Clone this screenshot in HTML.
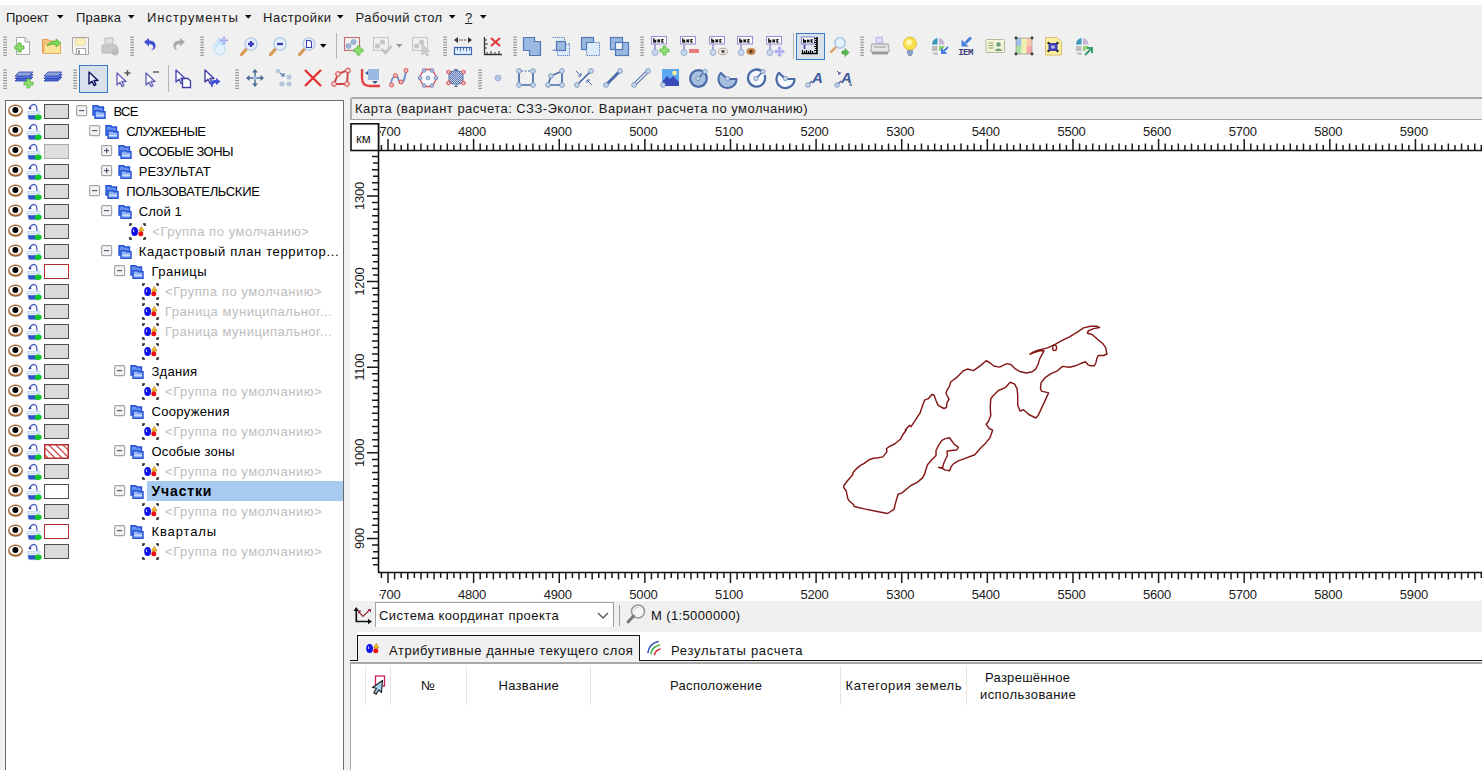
<!DOCTYPE html><html><head><meta charset="utf-8"><style>
html,body{margin:0;padding:0;}
body{width:1482px;height:770px;overflow:hidden;position:relative;background:#f0f0f0;font-family:"Liberation Sans",sans-serif;}
.t{position:absolute;white-space:nowrap;line-height:13px;font-family:"Liberation Sans",sans-serif;}
svg{overflow:visible}
</style></head><body>
<div style="position:absolute;left:0px;top:0px;width:1482px;height:5px;background:#fff"></div>
<div class="t" style="left:6px;top:11px;font-size:13px;letter-spacing:-0.03px;color:#1a1a1a;font-weight:400;">Проект</div>
<svg style="position:absolute;left:57px;top:15px" width="7" height="4" viewBox="0 0 7 4"><path d="M0 0H6.5L3.25 3.8Z" fill="#000"/></svg>
<div class="t" style="left:76px;top:11px;font-size:13px;letter-spacing:0.2px;color:#1a1a1a;font-weight:400;">Правка</div>
<svg style="position:absolute;left:128px;top:15px" width="7" height="4" viewBox="0 0 7 4"><path d="M0 0H6.5L3.25 3.8Z" fill="#000"/></svg>
<div class="t" style="left:147px;top:11px;font-size:13px;letter-spacing:0.97px;color:#1a1a1a;font-weight:400;">Инструменты</div>
<svg style="position:absolute;left:244.5px;top:15px" width="7" height="4" viewBox="0 0 7 4"><path d="M0 0H6.5L3.25 3.8Z" fill="#000"/></svg>
<div class="t" style="left:263px;top:11px;font-size:13px;letter-spacing:0.53px;color:#1a1a1a;font-weight:400;">Настройки</div>
<svg style="position:absolute;left:337px;top:15px" width="7" height="4" viewBox="0 0 7 4"><path d="M0 0H6.5L3.25 3.8Z" fill="#000"/></svg>
<div class="t" style="left:355.5px;top:11px;font-size:13px;letter-spacing:0.46px;color:#1a1a1a;font-weight:400;">Рабочий стол</div>
<svg style="position:absolute;left:448.5px;top:15px" width="7" height="4" viewBox="0 0 7 4"><path d="M0 0H6.5L3.25 3.8Z" fill="#000"/></svg>
<div class="t" style="left:465px;top:11px;font-size:13px;letter-spacing:0px;color:#1a1a1a;font-weight:400;"><u>?</u></div>
<svg style="position:absolute;left:480px;top:15px" width="7" height="4" viewBox="0 0 7 4"><path d="M0 0H6.5L3.25 3.8Z" fill="#000"/></svg>
<svg style="position:absolute;left:3px;top:36px" width="4" height="20" viewBox="0 0 4 20"><rect x="0.3" y="0.60" width="3.6" height="1.1" fill="#8c8c8c"/><rect x="0.3" y="3.20" width="3.6" height="1.1" fill="#8c8c8c"/><rect x="0.3" y="5.80" width="3.6" height="1.1" fill="#8c8c8c"/><rect x="0.3" y="8.40" width="3.6" height="1.1" fill="#8c8c8c"/><rect x="0.3" y="11.00" width="3.6" height="1.1" fill="#8c8c8c"/><rect x="0.3" y="13.60" width="3.6" height="1.1" fill="#8c8c8c"/><rect x="0.3" y="16.20" width="3.6" height="1.1" fill="#8c8c8c"/><rect x="0.3" y="18.80" width="3.6" height="1.1" fill="#8c8c8c"/></svg>
<svg style="position:absolute;left:12px;top:36px" width="20" height="20" viewBox="0 0 20 20"><path d="M4.5 1.5H13L17.5 6V18.5H4.5Z" fill="#fff" stroke="#a8a8a8"/><path d="M13 1.5V6H17.5" fill="#e8e8e8" stroke="#a8a8a8"/><path d="M3 10H6V7H9V10H12V13H9V16H6V13H3Z" fill="#8fe070" stroke="#5cb83c"/></svg>
<svg style="position:absolute;left:41px;top:36px" width="20" height="20" viewBox="0 0 20 20"><path d="M1.5 3.5H7L8.5 5H14V17H1.5Z" fill="#f7c27c" stroke="#e59a4e"/><path d="M3 8H19.5V17.5H3Z" fill="#fde39a" stroke="#e9a95e"/><path d="M6 10C8 6 12 5 15 5.5V3L20 7L15 11V8.5C12 8 9 8.5 6 10Z" fill="#7ad957" stroke="#4fb332" stroke-width=".8"/></svg>
<svg style="position:absolute;left:71px;top:36px" width="20" height="20" viewBox="0 0 20 20"><path d="M1.5 1.5H17.5V18.5H3.5L1.5 16.5Z" fill="#f4f4f4" stroke="#a6a6a6"/><rect x="4.5" y="2.5" width="10" height="7" fill="#fcefb8" stroke="#d9ceb0" stroke-width=".6"/><rect x="5.5" y="12.5" width="9" height="6" fill="#fff" stroke="#a6a6a6"/><rect x="7" y="14" width="2" height="4" fill="#a6a6a6"/></svg>
<svg style="position:absolute;left:100px;top:36px" width="20" height="20" viewBox="0 0 20 20"><path d="M5 2H13V8H5Z" fill="#e0e0e0" stroke="#bdbdbd"/><path d="M2 9H16L18 13V17H2Z" fill="#c8c8c8" stroke="#b8b8b8"/><circle cx="15" cy="16" r="3.5" fill="#bdbdbd"/></svg>
<svg style="position:absolute;left:130px;top:36px" width="4" height="20" viewBox="0 0 4 20"><rect x="0.3" y="0.60" width="3.6" height="1.1" fill="#8c8c8c"/><rect x="0.3" y="3.20" width="3.6" height="1.1" fill="#8c8c8c"/><rect x="0.3" y="5.80" width="3.6" height="1.1" fill="#8c8c8c"/><rect x="0.3" y="8.40" width="3.6" height="1.1" fill="#8c8c8c"/><rect x="0.3" y="11.00" width="3.6" height="1.1" fill="#8c8c8c"/><rect x="0.3" y="13.60" width="3.6" height="1.1" fill="#8c8c8c"/><rect x="0.3" y="16.20" width="3.6" height="1.1" fill="#8c8c8c"/><rect x="0.3" y="18.80" width="3.6" height="1.1" fill="#8c8c8c"/></svg>
<svg style="position:absolute;left:141px;top:36px" width="20" height="20" viewBox="0 0 20 20"><path d="M3 6L8 2V4.5C12 4.5 15 6.5 14.5 10.5C14.2 13 12 14.5 10 14L12 12.5C13 11 12 8 8 8V10.5Z" fill="#3f4fd6"/></svg>
<svg style="position:absolute;left:170px;top:36px" width="20" height="20" viewBox="0 0 20 20"><path d="M15 6L10 2V4.5C6 4.5 3 6.5 3.5 10.5C3.8 13 6 14.5 8 14L6 12.5C5 11 6 8 10 8V10.5Z" fill="#a9a9a9"/></svg>
<svg style="position:absolute;left:200px;top:36px" width="4" height="20" viewBox="0 0 4 20"><rect x="0.3" y="0.60" width="3.6" height="1.1" fill="#8c8c8c"/><rect x="0.3" y="3.20" width="3.6" height="1.1" fill="#8c8c8c"/><rect x="0.3" y="5.80" width="3.6" height="1.1" fill="#8c8c8c"/><rect x="0.3" y="8.40" width="3.6" height="1.1" fill="#8c8c8c"/><rect x="0.3" y="11.00" width="3.6" height="1.1" fill="#8c8c8c"/><rect x="0.3" y="13.60" width="3.6" height="1.1" fill="#8c8c8c"/><rect x="0.3" y="16.20" width="3.6" height="1.1" fill="#8c8c8c"/><rect x="0.3" y="18.80" width="3.6" height="1.1" fill="#8c8c8c"/></svg>
<svg style="position:absolute;left:210px;top:36px" width="20" height="20" viewBox="0 0 20 20"><path d="M4 10C3 8 5 7 6 9L7 11V4C7 2.5 9 2.5 9 4V9V3C9 1.5 11 1.5 11 3V9V4C11 2.5 13 2.5 13 4V10V6C13 5 15 5 15 6V13C15 17 12 19 9 19C6 19 5 16 4 10Z" fill="#e4f2fb" stroke="#b7dcf2"/><path d="M14.5 1L16.5 3.5H15.3V5.2H17V4L19.5 6L17 8V6.8H15.3V8.5H16.5L14.5 11L12.5 8.5H13.7V6.8H12V8L9.5 6L12 4V5.2H13.7V3.5H12.5Z" fill="#a9a6f0" transform="translate(1,-1) scale(.9)"/></svg>
<svg style="position:absolute;left:239px;top:36px" width="20" height="20" viewBox="0 0 20 20"><path d="M2.5 18.5L8 12.5" stroke="#d79a55" stroke-width="3.2" stroke-linecap="round"/><circle cx="12" cy="8" r="6" fill="#e9f3fb" stroke="#b8cde6" stroke-width="1.6"/><path d="M9 8H15M12 5V11" stroke="#3b3fb0" stroke-width="2.4"/></svg>
<svg style="position:absolute;left:267.6px;top:36px" width="20" height="20" viewBox="0 0 20 20"><path d="M2.5 18.5L8 12.5" stroke="#d79a55" stroke-width="3.2" stroke-linecap="round"/><circle cx="12" cy="8" r="6" fill="#e9f3fb" stroke="#b8cde6" stroke-width="1.6"/><path d="M9 8H15" stroke="#3b3fb0" stroke-width="2.4"/></svg>
<svg style="position:absolute;left:296.6px;top:36px" width="20" height="20" viewBox="0 0 20 20"><path d="M2.5 18.5L8 12.5" stroke="#d79a55" stroke-width="3.2" stroke-linecap="round"/><circle cx="12" cy="8" r="6" fill="#e9f3fb" stroke="#b8cde6" stroke-width="1.6"/><path d="M9.5 4.5H13L14.5 6V11.5H9.5Z" fill="#fff" stroke="#3b3fb0" stroke-width="1.1"/></svg>
<svg style="position:absolute;left:320px;top:44px" width="7" height="4" viewBox="0 0 7 4"><path d="M0 0H6.5L3.25 3.8Z" fill="#000"/></svg>
<div style="position:absolute;left:335.5px;top:33px;width:1px;height:26px;background:#b4b4b4"></div>
<svg style="position:absolute;left:342.5px;top:36px" width="20" height="20" viewBox="0 0 20 20"><rect x="1.5" y="1.5" width="15" height="13" fill="none" stroke="#c07070" stroke-width="1.1"/><circle cx="5.5" cy="10" r="2.6" fill="#9fb6da" stroke="#7f99c2" stroke-width=".6"/><circle cx="10.5" cy="6" r="2.6" fill="#9fb6da" stroke="#7f99c2" stroke-width=".6"/><path d="M11 13H14V10H17V13H20V16H17V19H14V16H11Z" fill="#8fe070" stroke="#5cb83c" stroke-width=".8"/></svg>
<svg style="position:absolute;left:371.5px;top:36px" width="20" height="20" viewBox="0 0 20 20"><rect x="1.5" y="1.5" width="15" height="13" fill="none" stroke="#c8c8c8" stroke-width="1.1"/><circle cx="5.5" cy="10" r="2.6" fill="#c6c6c6"/><circle cx="10.5" cy="6" r="2.6" fill="#c6c6c6"/><path d="M9.5 13L13.5 17L19.5 10" fill="none" stroke="#c4c4c4" stroke-width="2.6"/></svg>
<svg style="position:absolute;left:395.5px;top:44px" width="7" height="4" viewBox="0 0 7 4"><path d="M0 0H6.5L3.25 3.8Z" fill="#9a9a9a"/></svg>
<svg style="position:absolute;left:411px;top:36px" width="20" height="20" viewBox="0 0 20 20"><rect x="1.5" y="1.5" width="15" height="13" fill="none" stroke="#c8c8c8" stroke-width="1.1"/><circle cx="5.5" cy="10" r="2.6" fill="#c6c6c6"/><circle cx="10.5" cy="6" r="2.6" fill="#c6c6c6"/><path d="M11 8L11 19L13.5 16.5L16 20L17.5 19L15 15.5H18.5Z" fill="#d0d0d0" stroke="#b0b0b0" stroke-width=".6"/></svg>
<svg style="position:absolute;left:442.7px;top:36px" width="4" height="20" viewBox="0 0 4 20"><rect x="0.3" y="0.60" width="3.6" height="1.1" fill="#8c8c8c"/><rect x="0.3" y="3.20" width="3.6" height="1.1" fill="#8c8c8c"/><rect x="0.3" y="5.80" width="3.6" height="1.1" fill="#8c8c8c"/><rect x="0.3" y="8.40" width="3.6" height="1.1" fill="#8c8c8c"/><rect x="0.3" y="11.00" width="3.6" height="1.1" fill="#8c8c8c"/><rect x="0.3" y="13.60" width="3.6" height="1.1" fill="#8c8c8c"/><rect x="0.3" y="16.20" width="3.6" height="1.1" fill="#8c8c8c"/><rect x="0.3" y="18.80" width="3.6" height="1.1" fill="#8c8c8c"/></svg>
<svg style="position:absolute;left:453px;top:36px" width="20" height="20" viewBox="0 0 20 20"><path d="M1 4L5 1V7Z M19 4L15 1V7Z" fill="#333"/><path d="M6 4H14" stroke="#333" stroke-dasharray="1.5 1" stroke-width="1.1"/><rect x="1.5" y="11.5" width="17" height="7" fill="#e2efff" stroke="#3f64b2" stroke-width="1.2"/><path d="M4.5 12V14.5M7.5 12V15.5M10.5 12V14.5M13.5 12V15.5M16.5 12V14.5" stroke="#3f64b2" stroke-width=".9"/></svg>
<svg style="position:absolute;left:482.6px;top:36px" width="20" height="20" viewBox="0 0 20 20"><path d="M1.5 1V18.5H19" fill="none" stroke="#333" stroke-width="1.3"/><path d="M2 4H4M2 8H5M2 12H4M4 18V16M8 18V15M12 18V16M16 18V15" stroke="#333" stroke-width="1"/><path d="M8 2L17 10M17 2L8 10" stroke="#e03838" stroke-width="2"/></svg>
<svg style="position:absolute;left:513px;top:36px" width="4" height="20" viewBox="0 0 4 20"><rect x="0.3" y="0.60" width="3.6" height="1.1" fill="#8c8c8c"/><rect x="0.3" y="3.20" width="3.6" height="1.1" fill="#8c8c8c"/><rect x="0.3" y="5.80" width="3.6" height="1.1" fill="#8c8c8c"/><rect x="0.3" y="8.40" width="3.6" height="1.1" fill="#8c8c8c"/><rect x="0.3" y="11.00" width="3.6" height="1.1" fill="#8c8c8c"/><rect x="0.3" y="13.60" width="3.6" height="1.1" fill="#8c8c8c"/><rect x="0.3" y="16.20" width="3.6" height="1.1" fill="#8c8c8c"/><rect x="0.3" y="18.80" width="3.6" height="1.1" fill="#8c8c8c"/></svg>
<svg style="position:absolute;left:522.4px;top:36px" width="20" height="20" viewBox="0 0 20 20"><path d="M1.5 1.5H12.5V5.5H18.5V19.5H7.5V14.5H1.5Z" fill="#9ab8e0" stroke="#5278b8" stroke-width="1.2"/></svg>
<svg style="position:absolute;left:551.4px;top:36px" width="20" height="20" viewBox="0 0 20 20"><path d="M1.5 1.5H13.5V5.5M18.5 7.5V19.5H6.5V14.5H1.5Z" fill="#dcebf9" stroke="#5278b8" stroke-width="1" stroke-dasharray="1.2 1"/><rect x="5.5" y="5.5" width="9" height="9" fill="#9ab8e0" stroke="#5278b8" stroke-width="1.2"/></svg>
<svg style="position:absolute;left:580px;top:36px" width="20" height="20" viewBox="0 0 20 20"><rect x="1.5" y="1.5" width="12" height="12" fill="#9ab8e0" stroke="#5278b8" stroke-width="1.2"/><rect x="6.5" y="6.5" width="13" height="13" fill="#dcebf9" stroke="#5278b8" stroke-width="1" stroke-dasharray="1.2 1"/><path d="M6.5 13.5V6.5H13.5" fill="none" stroke="#5278b8" stroke-width="1.2"/></svg>
<svg style="position:absolute;left:609px;top:36px" width="20" height="20" viewBox="0 0 20 20"><rect x="1.5" y="1.5" width="12" height="12" fill="#9ab8e0" stroke="#5278b8" stroke-width="1.2"/><rect x="6.5" y="6.5" width="13" height="13" fill="#9ab8e0" stroke="#5278b8" stroke-width="1.2"/><rect x="6.5" y="6.5" width="7" height="7" fill="#f4f8fd" stroke="#5278b8" stroke-width="1.2"/></svg>
<svg style="position:absolute;left:640px;top:36px" width="4" height="20" viewBox="0 0 4 20"><rect x="0.3" y="0.60" width="3.6" height="1.1" fill="#8c8c8c"/><rect x="0.3" y="3.20" width="3.6" height="1.1" fill="#8c8c8c"/><rect x="0.3" y="5.80" width="3.6" height="1.1" fill="#8c8c8c"/><rect x="0.3" y="8.40" width="3.6" height="1.1" fill="#8c8c8c"/><rect x="0.3" y="11.00" width="3.6" height="1.1" fill="#8c8c8c"/><rect x="0.3" y="13.60" width="3.6" height="1.1" fill="#8c8c8c"/><rect x="0.3" y="16.20" width="3.6" height="1.1" fill="#8c8c8c"/><rect x="0.3" y="18.80" width="3.6" height="1.1" fill="#8c8c8c"/></svg>
<svg style="position:absolute;left:650.3px;top:36px" width="20" height="20" viewBox="0 0 20 20"><rect x="1.5" y="0.5" width="15" height="7.5" fill="#fff" stroke="#9e92d8" stroke-width="1.1"/><path d="M3.8 2.3V6.2H5.6V4.3H3.8M7.5 3.5L10 6.2M10 3.5L7.5 6.2M13.6 3.6H12V6.2H13.6" fill="none" stroke="#111" stroke-width="1.3"/><path d="M5 8V14" stroke="#9e92d8" stroke-width="1.6"/><circle cx="5" cy="16.5" r="3" fill="#c9d8ee" stroke="#8ca6cc" stroke-width=".8"/><path d="M10 13H13V10H16V13H19V16H16V19H13V16H10Z" fill="#8fe070" stroke="#5cb83c" stroke-width=".8"/></svg>
<svg style="position:absolute;left:679.3px;top:36px" width="20" height="20" viewBox="0 0 20 20"><rect x="1.5" y="0.5" width="15" height="7.5" fill="#fff" stroke="#9e92d8" stroke-width="1.1"/><path d="M3.8 2.3V6.2H5.6V4.3H3.8M7.5 3.5L10 6.2M10 3.5L7.5 6.2M13.6 3.6H12V6.2H13.6" fill="none" stroke="#111" stroke-width="1.3"/><path d="M5 8V14" stroke="#9e92d8" stroke-width="1.6"/><circle cx="5" cy="16.5" r="3" fill="#c9d8ee" stroke="#8ca6cc" stroke-width=".8"/><rect x="10" y="13" width="10" height="4" fill="#ea7a7a"/></svg>
<svg style="position:absolute;left:707.6px;top:36px" width="20" height="20" viewBox="0 0 20 20"><rect x="1.5" y="0.5" width="15" height="7.5" fill="#fff" stroke="#9e92d8" stroke-width="1.1"/><path d="M3.8 2.3V6.2H5.6V4.3H3.8M7.5 3.5L10 6.2M10 3.5L7.5 6.2M13.6 3.6H12V6.2H13.6" fill="none" stroke="#111" stroke-width="1.3"/><path d="M5 8V14" stroke="#9e92d8" stroke-width="1.6"/><circle cx="5" cy="16.5" r="3" fill="#c9d8ee" stroke="#8ca6cc" stroke-width=".8"/><ellipse cx="15" cy="15.5" rx="4.5" ry="3.2" fill="#eee" stroke="#b8a890"/><circle cx="15" cy="15.5" r="1.7" fill="#555"/></svg>
<svg style="position:absolute;left:736px;top:36px" width="20" height="20" viewBox="0 0 20 20"><rect x="1.5" y="0.5" width="15" height="7.5" fill="#fff" stroke="#9e92d8" stroke-width="1.1"/><path d="M3.8 2.3V6.2H5.6V4.3H3.8M7.5 3.5L10 6.2M10 3.5L7.5 6.2M13.6 3.6H12V6.2H13.6" fill="none" stroke="#111" stroke-width="1.3"/><path d="M5 8V14" stroke="#9e92d8" stroke-width="1.6"/><circle cx="5" cy="16.5" r="3" fill="#c9d8ee" stroke="#8ca6cc" stroke-width=".8"/><ellipse cx="15" cy="15.5" rx="4.5" ry="3.4" fill="#c7864e"/><circle cx="15" cy="15.5" r="1.7" fill="#5a3a20"/></svg>
<svg style="position:absolute;left:765.4px;top:36px" width="20" height="20" viewBox="0 0 20 20"><rect x="1.5" y="0.5" width="15" height="7.5" fill="#fff" stroke="#9e92d8" stroke-width="1.1"/><path d="M3.8 2.3V6.2H5.6V4.3H3.8M7.5 3.5L10 6.2M10 3.5L7.5 6.2M13.6 3.6H12V6.2H13.6" fill="none" stroke="#111" stroke-width="1.3"/><path d="M5 8V14" stroke="#9e92d8" stroke-width="1.6"/><circle cx="5" cy="16.5" r="3" fill="#c9d8ee" stroke="#8ca6cc" stroke-width=".8"/><path d="M14.5 10L17 12.5H15.5V14.5H17.5V13L20 15.5L17.5 18V16.5H15.5V18.5H17L14.5 21L12 18.5H13.5V16.5H11.5V18L9 15.5L11.5 13V14.5H13.5V12.5H12Z" fill="#a9a6f0"/></svg>
<div style="position:absolute;left:793px;top:33px;width:1px;height:26px;background:#b4b4b4"></div>
<div style="position:absolute;left:796.4px;top:32.5px;width:28.4px;height:27.5px;box-sizing:border-box;border:1.3px solid #3a7cc8;background:#d8e1ec"></div>
<svg style="position:absolute;left:800px;top:36px" width="20" height="20" viewBox="0 0 20 20"><rect x="1.5" y="1" width="13" height="14" fill="#e4e8f4"/><rect x="1.5" y="1" width="13" height="7" fill="#fff" stroke="#8a84c8" stroke-width="1.1"/><path d="M3.6 2.8V6.2H5.4V4.6H3.6M7 3.8L9.4 6.2M9.4 3.8L7 6.2M12.8 3.8H11.2V6.2H12.8" fill="none" stroke="#000" stroke-width="1.3"/><path d="M4.5 8.5V13" stroke="#5050a8" stroke-width="1.8"/><path d="M17 1V17.5H1.5" fill="none" stroke="#000" stroke-width="1.6"/><path d="M14 2.5H17M15 4.5H17M14 6.5H17M15 8.5H17M14 10.5H17M15 12.5H17M14 14.5H17M2.5 14V17.5M4.5 15V17.5M6.5 14V17.5M8.5 15V17.5M10.5 14V17.5M12.5 15V17.5" stroke="#000" stroke-width="1.2"/></svg>
<svg style="position:absolute;left:828.8px;top:36px" width="20" height="20" viewBox="0 0 20 20"><path d="M2 16L7 11" stroke="#e0a060" stroke-width="2.4" stroke-linecap="round"/><circle cx="11" cy="7" r="5.2" fill="#e4f4fc" stroke="#b4c8e4" stroke-width="1.8"/><path d="M13 15H16V12.5L20 16.5L16 20.5V18H13Z" fill="#58b848" stroke="#3a9a38" stroke-width=".6"/></svg>
<svg style="position:absolute;left:860px;top:36px" width="4" height="20" viewBox="0 0 4 20"><rect x="0.3" y="0.60" width="3.6" height="1.1" fill="#8c8c8c"/><rect x="0.3" y="3.20" width="3.6" height="1.1" fill="#8c8c8c"/><rect x="0.3" y="5.80" width="3.6" height="1.1" fill="#8c8c8c"/><rect x="0.3" y="8.40" width="3.6" height="1.1" fill="#8c8c8c"/><rect x="0.3" y="11.00" width="3.6" height="1.1" fill="#8c8c8c"/><rect x="0.3" y="13.60" width="3.6" height="1.1" fill="#8c8c8c"/><rect x="0.3" y="16.20" width="3.6" height="1.1" fill="#8c8c8c"/><rect x="0.3" y="18.80" width="3.6" height="1.1" fill="#8c8c8c"/></svg>
<svg style="position:absolute;left:870px;top:36px" width="20" height="20" viewBox="0 0 20 20"><path d="M6 1.5L12 1L13 7H6Z" fill="#dcdcfa" stroke="#a9a9e0" stroke-width=".8"/><path d="M2 8H18L19 12V16H1V12Z" fill="#e4e4e4" stroke="#a0a0a0"/><path d="M2 16H18V18.5H2Z" fill="#9a9a9a"/><path d="M4 11H16" stroke="#888" stroke-width=".8"/></svg>
<svg style="position:absolute;left:900px;top:36px" width="20" height="20" viewBox="0 0 20 20"><circle cx="10" cy="7.5" r="6.5" fill="#f9e04a" stroke="#e0c23a"/><circle cx="9" cy="6.5" r="3" fill="#fff7b0"/><path d="M7 15H13M7 17H13M8 19H12" stroke="#7086b8" stroke-width="1.5"/></svg>
<svg style="position:absolute;left:929.4px;top:36px" width="20" height="20" viewBox="0 0 20 20"><path d="M3 8.5A6.5 6.5 0 0 1 8.5 2V8.5Z" fill="#3a98c0"/><path d="M10 2A6.5 6.5 0 0 1 15.5 8.5H10Z" fill="#c4b8d4"/><rect x="3" y="10" width="5.5" height="5" fill="#bcbcbc"/><path d="M10 10H15.5A6.5 6.5 0 0 1 10 15Z" fill="#8fd070"/><path d="M3 16.5H8.5V19A6 6 0 0 1 3 16.5Z" fill="#bcbcbc"/><path d="M19 11L13 17M13 12.5V17H17.5" stroke="#4a7ee0" stroke-width="2" fill="none"/></svg>
<svg style="position:absolute;left:956px;top:36px" width="20" height="20" viewBox="0 0 20 20"><path d="M15 1.5L9.5 7" stroke="#4a7ee0" stroke-width="3"/><path d="M5.5 3.5V10.5H12.5Z" fill="#4a7ee0"/><text x="9.5" y="19.3" font-family="Liberation Mono" font-weight="700" font-size="9" letter-spacing="-0.6" text-anchor="middle" fill="#3a3a78">IEM</text></svg>
<svg style="position:absolute;left:985.3px;top:36px" width="20" height="20" viewBox="0 0 20 20"><rect x="1" y="3.5" width="18.5" height="13" rx="1" fill="#f2f4d8" stroke="#b8b8a0"/><path d="M3.5 7H8.5M3.5 9.5H8.5M3.5 12H8.5" stroke="#8aa070" stroke-width="1"/><circle cx="13.5" cy="8.5" r="2.3" fill="#6aa080"/><path d="M10 15C10 11.5 17 11.5 17 15Z" fill="#6aa080"/></svg>
<svg style="position:absolute;left:1014px;top:36px" width="20" height="20" viewBox="0 0 20 20"><rect x="2" y="2" width="5.5" height="8" fill="#9ec0e8"/><rect x="2" y="10" width="5.5" height="8" fill="#a8e0a0"/><rect x="7.5" y="2" width="5" height="16" fill="#f0f0b0"/><rect x="12.5" y="2" width="5.5" height="8" fill="#f8c8a8"/><rect x="12.5" y="10" width="5.5" height="8" fill="#f8a8a8"/><rect x="2" y="2" width="16" height="16" fill="none" stroke="#888" stroke-width=".6"/><circle cx="2" cy="2" r="1.4" fill="#333"/><circle cx="18" cy="2" r="1.4" fill="#333"/><circle cx="2" cy="18" r="1.4" fill="#333"/><circle cx="18" cy="18" r="1.4" fill="#333"/></svg>
<svg style="position:absolute;left:1044px;top:36px" width="20" height="20" viewBox="0 0 20 20"><path d="M1.5 1.5H13L17.5 6V19H1.5Z" fill="#faf0a0" stroke="#d8c070"/><rect x="4.5" y="7" width="9" height="8" fill="#3c3cb0"/><rect x="7" y="9.5" width="4" height="3" fill="#aab0f0"/><circle cx="4.5" cy="7" r="1.2" fill="#222"/><circle cx="13.5" cy="7" r="1.2" fill="#222"/><circle cx="4.5" cy="15" r="1.2" fill="#222"/><circle cx="13.5" cy="15" r="1.2" fill="#222"/></svg>
<svg style="position:absolute;left:1073px;top:36px" width="20" height="20" viewBox="0 0 20 20"><path d="M3 8.5A6.5 6.5 0 0 1 8.5 2V8.5Z" fill="#3a98c0"/><path d="M10 2A6.5 6.5 0 0 1 15.5 8.5H10Z" fill="#c4b8d4"/><rect x="3" y="10" width="5.5" height="5" fill="#bcbcbc"/><path d="M10 10H15.5A6.5 6.5 0 0 1 10 15Z" fill="#8fd070"/><path d="M3 16.5H8.5V19A6 6 0 0 1 3 16.5Z" fill="#bcbcbc"/><path d="M12 19L18.5 12.5M14 12H19V17" stroke="#3aa070" stroke-width="2" fill="none"/></svg>
<svg style="position:absolute;left:3px;top:68.5px" width="4" height="20" viewBox="0 0 4 20"><rect x="0.3" y="0.60" width="3.6" height="1.1" fill="#8c8c8c"/><rect x="0.3" y="3.20" width="3.6" height="1.1" fill="#8c8c8c"/><rect x="0.3" y="5.80" width="3.6" height="1.1" fill="#8c8c8c"/><rect x="0.3" y="8.40" width="3.6" height="1.1" fill="#8c8c8c"/><rect x="0.3" y="11.00" width="3.6" height="1.1" fill="#8c8c8c"/><rect x="0.3" y="13.60" width="3.6" height="1.1" fill="#8c8c8c"/><rect x="0.3" y="16.20" width="3.6" height="1.1" fill="#8c8c8c"/><rect x="0.3" y="18.80" width="3.6" height="1.1" fill="#8c8c8c"/></svg>
<svg style="position:absolute;left:13.5px;top:68px" width="20" height="20" viewBox="0 0 20 20"><path d="M1 13L5 9H19L15 13Z" fill="#4a66d0" stroke="#3040b0" stroke-width=".8"/><path d="M1 10.5L5 6.5H19L15 10.5Z" fill="#5a76e0" stroke="#3040b0" stroke-width=".8"/><path d="M1 8L5 4H19L15 8Z" fill="#8aa4d8" stroke="#3040b0" stroke-width=".8"/><path d="M10 14H13V11H16V14H19V17H16V20H13V17H10Z" fill="#8fe070" stroke="#5cb83c" stroke-width=".8"/></svg>
<svg style="position:absolute;left:42.5px;top:68px" width="20" height="20" viewBox="0 0 20 20"><path d="M1 13L5 9H19L15 13Z" fill="#4a66d0" stroke="#3040b0" stroke-width=".8"/><path d="M1 10.5L5 6.5H19L15 10.5Z" fill="#5a76e0" stroke="#3040b0" stroke-width=".8"/><path d="M1 8L5 4H19L15 8Z" fill="#8aa4d8" stroke="#3040b0" stroke-width=".8"/></svg>
<svg style="position:absolute;left:73px;top:68.5px" width="4" height="20" viewBox="0 0 4 20"><rect x="0.3" y="0.60" width="3.6" height="1.1" fill="#8c8c8c"/><rect x="0.3" y="3.20" width="3.6" height="1.1" fill="#8c8c8c"/><rect x="0.3" y="5.80" width="3.6" height="1.1" fill="#8c8c8c"/><rect x="0.3" y="8.40" width="3.6" height="1.1" fill="#8c8c8c"/><rect x="0.3" y="11.00" width="3.6" height="1.1" fill="#8c8c8c"/><rect x="0.3" y="13.60" width="3.6" height="1.1" fill="#8c8c8c"/><rect x="0.3" y="16.20" width="3.6" height="1.1" fill="#8c8c8c"/><rect x="0.3" y="18.80" width="3.6" height="1.1" fill="#8c8c8c"/></svg>
<div style="position:absolute;left:79px;top:65px;width:29px;height:27.5px;box-sizing:border-box;border:1.3px solid #3a7cc8;background:#d8e1ec"></div>
<svg style="position:absolute;left:79px;top:68px" width="20" height="20" viewBox="0 0 20 20"><path transform="translate(9 3)" d="M1 1V13L4 10.3L6 14.5L7.8 13.6L6 9.5H10Z" fill="#f0f0ff" stroke="#10105a" stroke-width="1.4" stroke-linejoin="round"/></svg>
<svg style="position:absolute;left:113px;top:68px" width="20" height="20" viewBox="0 0 20 20"><path transform="translate(3 4)" d="M1 1V13L4 10.3L6 14.5L7.8 13.6L6 9.5H10Z" fill="#fff" stroke="#6a64b8" stroke-width="1.4" stroke-linejoin="round"/><path d="M11.5 5H17.5M14.5 2V8" stroke="#555" stroke-width="1.4"/></svg>
<svg style="position:absolute;left:142px;top:68px" width="20" height="20" viewBox="0 0 20 20"><path transform="translate(3 4)" d="M1 1V13L4 10.3L6 14.5L7.8 13.6L6 9.5H10Z" fill="#fff" stroke="#6a64b8" stroke-width="1.4" stroke-linejoin="round"/><path d="M11 4H17" stroke="#555" stroke-width="1.4"/></svg>
<div style="position:absolute;left:168px;top:65px;width:1px;height:27px;background:#b4b4b4"></div>
<svg style="position:absolute;left:172px;top:68px" width="20" height="20" viewBox="0 0 20 20"><path transform="translate(3 1)" d="M1 1V13L4 10.3L6 14.5L7.8 13.6L6 9.5H10Z" fill="#fff" stroke="#5050b0" stroke-width="1.4" stroke-linejoin="round"/><path d="M10.5 10.5H16L18.5 13V19.5H10.5Z" fill="#fff" stroke="#4040a8" stroke-width="1.3"/></svg>
<svg style="position:absolute;left:201px;top:68px" width="20" height="20" viewBox="0 0 20 20"><path transform="translate(3 1)" d="M1 1V13L4 10.3L6 14.5L7.8 13.6L6 9.5H10Z" fill="#fff" stroke="#4040a8" stroke-width="1.4" stroke-linejoin="round"/><path d="M19.5 13.5L15 10V12C12 11.5 9.5 13 9.5 16C9.5 17.5 10.5 19 12 19.5C11.5 18 11.5 15 15 15V17Z" fill="#3f4fd6"/></svg>
<svg style="position:absolute;left:235px;top:68.5px" width="4" height="20" viewBox="0 0 4 20"><rect x="0.3" y="0.60" width="3.6" height="1.1" fill="#8c8c8c"/><rect x="0.3" y="3.20" width="3.6" height="1.1" fill="#8c8c8c"/><rect x="0.3" y="5.80" width="3.6" height="1.1" fill="#8c8c8c"/><rect x="0.3" y="8.40" width="3.6" height="1.1" fill="#8c8c8c"/><rect x="0.3" y="11.00" width="3.6" height="1.1" fill="#8c8c8c"/><rect x="0.3" y="13.60" width="3.6" height="1.1" fill="#8c8c8c"/><rect x="0.3" y="16.20" width="3.6" height="1.1" fill="#8c8c8c"/><rect x="0.3" y="18.80" width="3.6" height="1.1" fill="#8c8c8c"/></svg>
<svg style="position:absolute;left:245px;top:68px" width="20" height="20" viewBox="0 0 20 20"><path d="M10 2V18M2 10H18" stroke="#4a6a98" stroke-width="1.4"/><path d="M10 1L7 4.5H13Z M10 19L7 15.5H13Z M1 10L4.5 7V13Z M19 10L15.5 7V13Z" fill="#4a6a98"/><circle cx="10" cy="10" r="2" fill="#a8bcdc"/></svg>
<svg style="position:absolute;left:274px;top:68px" width="20" height="20" viewBox="0 0 20 20"><circle cx="4" cy="3" r="2.3" fill="#b6c6e0"/><path d="M6 5L10 8M10 5V8H7" stroke="#5a7ab8" stroke-width="1.2" fill="none"/><circle cx="15" cy="9" r="2.6" fill="#b6c6e0"/><circle cx="8" cy="16" r="2.6" fill="#b6c6e0"/><circle cx="15" cy="16" r="2.6" fill="#b6c6e0"/></svg>
<svg style="position:absolute;left:303px;top:68px" width="20" height="20" viewBox="0 0 20 20"><path d="M2 2L18 18M18 2L2 18" stroke="#e03030" stroke-width="2.3"/></svg>
<svg style="position:absolute;left:331px;top:68px" width="20" height="20" viewBox="0 0 20 20"><path d="M3 16L7 6L17 2L16 16Z" fill="none" stroke="#c84848" stroke-width="2"/><circle cx="3" cy="16" r="2.4" fill="#f8d0d0" stroke="#d84848"/><circle cx="7" cy="6" r="2.4" fill="#f8d0d0" stroke="#d84848"/><circle cx="17" cy="2.5" r="2.4" fill="#f8d0d0" stroke="#d84848"/><circle cx="16" cy="16" r="2.4" fill="#f8d0d0" stroke="#d84848"/></svg>
<svg style="position:absolute;left:360px;top:68px" width="20" height="20" viewBox="0 0 20 20"><path d="M2 1V10C2 15 5 18 10 18H20" fill="none" stroke="#e04040" stroke-width="2.3"/><rect x="8" y="1" width="11" height="11" fill="#9ab8e0"/><path d="M8 3L5 5L8 7Z" fill="#3a5aa0"/><path d="M12 13H18L15 16Z" fill="#3a5aa0"/></svg>
<svg style="position:absolute;left:388.8px;top:68px" width="20" height="20" viewBox="0 0 20 20"><path d="M2 17C2 12 4 8 7 8C10 8 9 15 12 15C15 15 16 9 17 3" fill="none" stroke="#6a90c8" stroke-width="1.8"/><circle cx="2.5" cy="17" r="2" fill="#f8c0c0" stroke="#e05050"/><circle cx="6.5" cy="7.5" r="2" fill="#f8c0c0" stroke="#e05050"/><circle cx="12" cy="14" r="2" fill="#f8c0c0" stroke="#e05050"/><circle cx="17" cy="2.5" r="2" fill="#f8c0c0" stroke="#e05050"/></svg>
<svg style="position:absolute;left:417.8px;top:68px" width="20" height="20" viewBox="0 0 20 20"><path d="M6 1.5H14L19 10L14 18.5H6L1 10Z" fill="#f4f8fd" stroke="#e05050" stroke-width="1.3"/><g fill="#b6c6e0" stroke="#5a7ab8" stroke-width=".7"><circle cx="6" cy="2.5" r="1.8"/><circle cx="14" cy="2.5" r="1.8"/><circle cx="2" cy="10" r="1.8"/><circle cx="18" cy="10" r="1.8"/><circle cx="6" cy="17.5" r="1.8"/><circle cx="14" cy="17.5" r="1.8"/><circle cx="10" cy="10" r="1.8"/></g></svg>
<svg style="position:absolute;left:446px;top:68px" width="20" height="20" viewBox="0 0 20 20"><defs><pattern id="ep" width="2" height="2" patternUnits="userSpaceOnUse"><rect width="2" height="2" fill="#5a76b0"/><rect width="1" height="1" fill="#c8d4ec"/><rect x="1" y="1" width="1" height="1" fill="#c8d4ec"/></pattern></defs><path d="M3 5C6 2 14 2 17 5V14C14 17 6 17 3 14Z" fill="url(#ep)" stroke="#5a76a8"/><path d="M8 1H12L10 3Z M8 19H12L10 17Z" fill="#3a5aa0"/><g fill="#f8c0c0" stroke="#e05050"><circle cx="2.5" cy="4" r="1.8"/><circle cx="17.5" cy="4" r="1.8"/><circle cx="2.5" cy="15" r="1.8"/><circle cx="17.5" cy="15" r="1.8"/></g></svg>
<svg style="position:absolute;left:477.8px;top:68.5px" width="4" height="20" viewBox="0 0 4 20"><rect x="0.3" y="0.60" width="3.6" height="1.1" fill="#8c8c8c"/><rect x="0.3" y="3.20" width="3.6" height="1.1" fill="#8c8c8c"/><rect x="0.3" y="5.80" width="3.6" height="1.1" fill="#8c8c8c"/><rect x="0.3" y="8.40" width="3.6" height="1.1" fill="#8c8c8c"/><rect x="0.3" y="11.00" width="3.6" height="1.1" fill="#8c8c8c"/><rect x="0.3" y="13.60" width="3.6" height="1.1" fill="#8c8c8c"/><rect x="0.3" y="16.20" width="3.6" height="1.1" fill="#8c8c8c"/><rect x="0.3" y="18.80" width="3.6" height="1.1" fill="#8c8c8c"/></svg>
<svg style="position:absolute;left:487.5px;top:68px" width="20" height="20" viewBox="0 0 20 20"><circle cx="10" cy="10" r="3" fill="#b6c6e0" stroke="#8aa0c8" stroke-width=".6"/></svg>
<svg style="position:absolute;left:516.3px;top:68px" width="20" height="20" viewBox="0 0 20 20"><path d="M3 3V17H17V3" fill="none" stroke="#4a6aa8" stroke-width="1.7"/><circle cx="3" cy="3" r="2.4" fill="#c6d4ea" stroke="#6a88b8" stroke-width=".7"/><circle cx="17" cy="3" r="2.4" fill="#c6d4ea" stroke="#6a88b8" stroke-width=".7"/><circle cx="3" cy="17" r="2.4" fill="#c6d4ea" stroke="#6a88b8" stroke-width=".7"/><circle cx="17" cy="17" r="2.4" fill="#c6d4ea" stroke="#6a88b8" stroke-width=".7"/><path d="M5 3H15" stroke="#4a6aa8" stroke-dasharray="2 1.5" stroke-width="1.2"/></svg>
<svg style="position:absolute;left:545.3px;top:68px" width="20" height="20" viewBox="0 0 20 20"><path d="M3 17L6 8L17 3V17Z" fill="none" stroke="#4a6aa8" stroke-width="1.7"/><circle cx="3" cy="17" r="2.4" fill="#c6d4ea" stroke="#6a88b8" stroke-width=".7"/><circle cx="6" cy="8" r="2.4" fill="#c6d4ea" stroke="#6a88b8" stroke-width=".7"/><circle cx="17" cy="3" r="2.4" fill="#c6d4ea" stroke="#6a88b8" stroke-width=".7"/><circle cx="17" cy="17" r="2.4" fill="#c6d4ea" stroke="#6a88b8" stroke-width=".7"/></svg>
<svg style="position:absolute;left:574px;top:68px" width="20" height="20" viewBox="0 0 20 20"><path d="M3 17L17 3" fill="none" stroke="#4a6aa8" stroke-width="1.7"/><circle cx="3" cy="17" r="2.4" fill="#c6d4ea" stroke="#6a88b8" stroke-width=".7"/><circle cx="17" cy="3" r="2.4" fill="#c6d4ea" stroke="#6a88b8" stroke-width=".7"/><path d="M2 3L7 8M4 8H7V5M18 17L13 12M16 12H13V15" stroke="#4a6aa8" stroke-width="1" fill="none"/></svg>
<svg style="position:absolute;left:603px;top:68px" width="20" height="20" viewBox="0 0 20 20"><path d="M3 17L17 3" stroke="#4a6aa8" stroke-width="3"/><circle cx="3" cy="17" r="2.4" fill="#c6d4ea" stroke="#6a88b8" stroke-width=".7"/><circle cx="17" cy="3" r="2.4" fill="#c6d4ea" stroke="#6a88b8" stroke-width=".7"/></svg>
<svg style="position:absolute;left:631.4px;top:68px" width="20" height="20" viewBox="0 0 20 20"><path d="M3 17L17 3" stroke="#4a6aa8" stroke-width="3.6"/><path d="M3 17L17 3" stroke="#fff" stroke-width="1.4"/><circle cx="3" cy="17" r="2.4" fill="#c6d4ea" stroke="#6a88b8" stroke-width=".7"/><circle cx="17" cy="3" r="2.4" fill="#c6d4ea" stroke="#6a88b8" stroke-width=".7"/></svg>
<svg style="position:absolute;left:660px;top:68px" width="20" height="20" viewBox="0 0 20 20"><rect x="2" y="1" width="17" height="17" fill="#5aa8f0"/><path d="M2 14L7 8L10 11L13 8L19 14V18H2Z" fill="#3a4ab8"/><circle cx="14.5" cy="5" r="2.3" fill="#f8f0a0"/><circle cx="3" cy="17" r="2.4" fill="#c6d4ea" stroke="#6a88b8" stroke-width=".7"/></svg>
<svg style="position:absolute;left:688.8px;top:68px" width="20" height="20" viewBox="0 0 20 20"><circle cx="9.5" cy="10.5" r="8.3" fill="#a8c0e0" stroke="#4a6aa8" stroke-width="2.2"/><path d="M9 10.5L16 3.5" stroke="#4a6aa8" stroke-width="1.5"/><circle cx="9" cy="10.5" r="2.2" fill="#c6d4ea" stroke="#6a88b8" stroke-width=".7"/><circle cx="16" cy="3.5" r="2.2" fill="#c6d4ea" stroke="#6a88b8" stroke-width=".7"/></svg>
<svg style="position:absolute;left:717.8px;top:68px" width="20" height="20" viewBox="0 0 20 20"><path d="M9.5 11L18.5 11A9 9 0 1 1 2.9 4.9Z" fill="#a8c0e0" stroke="#4a6aa8" stroke-width="2" stroke-linejoin="round"/><circle cx="9.5" cy="10.5" r="2.2" fill="#c6d4ea" stroke="#6a88b8" stroke-width=".7"/></svg>
<svg style="position:absolute;left:746.8px;top:68px" width="20" height="20" viewBox="0 0 20 20"><path d="M15 3.5A8.5 8.5 0 1 0 17.5 7" fill="#f4f8fd" stroke="#4a6aa8" stroke-width="2.3"/><path d="M9 10.5L16 3.5" stroke="#4a6aa8" stroke-width="1.6"/><circle cx="9" cy="10.5" r="2.2" fill="#c6d4ea" stroke="#6a88b8" stroke-width=".7"/><circle cx="16" cy="3.5" r="2.2" fill="#c6d4ea" stroke="#6a88b8" stroke-width=".7"/></svg>
<svg style="position:absolute;left:775.5px;top:68px" width="20" height="20" viewBox="0 0 20 20"><path d="M9.5 11L18.5 11A9 9 0 1 1 2.9 4.9Z" fill="#f4f8fd" stroke="#4a6aa8" stroke-width="2.2" stroke-linejoin="round"/><circle cx="9.5" cy="10.5" r="2.2" fill="#c6d4ea" stroke="#6a88b8" stroke-width=".7"/></svg>
<svg style="position:absolute;left:805px;top:68px" width="20" height="20" viewBox="0 0 20 20"><text x="12.5" y="15" font-family="Liberation Sans" font-style="italic" font-weight="700" font-size="15" text-anchor="middle" fill="#3e5c9c">A</text><path d="M3 17L7 13" stroke="#4a6aa8" stroke-width="1.3"/><circle cx="3" cy="17" r="2.3" fill="#c6d4ea" stroke="#6a88b8" stroke-width=".7"/></svg>
<svg style="position:absolute;left:834px;top:68px" width="20" height="20" viewBox="0 0 20 20"><text x="12.5" y="15" font-family="Liberation Sans" font-style="italic" font-weight="700" font-size="15" text-anchor="middle" fill="#3e5c9c">A</text><path d="M3 17L7 13" stroke="#4a6aa8" stroke-width="1.3"/><circle cx="3" cy="17" r="2.3" fill="#c6d4ea" stroke="#6a88b8" stroke-width=".7"/><path d="M3 3L6 6M4 6H6V4M18 18L16 16M17.5 16H16V17.5" stroke="#3a4a88" stroke-width="1" fill="none"/></svg>
<div style="position:absolute;left:5px;top:100px;width:339px;height:680px;box-sizing:border-box;border:1px solid #6a6a6a;border-bottom:none;background:#fff"></div>
<svg style="position:absolute;left:8px;top:104px" width="15" height="14" viewBox="0 0 15 14"><ellipse cx="7.5" cy="6.6" rx="7.4" ry="6.2" fill="#8e5424"/><ellipse cx="7.5" cy="6.4" rx="6.4" ry="5" fill="#d0a070"/><ellipse cx="7.5" cy="6.1" rx="5.9" ry="4.1" fill="#fff"/><circle cx="7.4" cy="6.1" r="3" fill="#000"/></svg>
<svg style="position:absolute;left:25.5px;top:104px" width="16" height="16" viewBox="0 0 16 16"><path d="M4 4.5C4 1.5 6.5 0.3 8.8 0.6C10.5 0.9 11 2.5 11 7" fill="none" stroke="#5066c0" stroke-width="1.4"/><circle cx="4" cy="4.2" r="1.3" fill="#3a4aa0"/><path d="M1 7.5L2.8 15.8H12.6L14.2 7.3Z" fill="#e6f0fc" stroke="#b0c4e6" stroke-width=".6"/><path d="M1.9 11.2L2.9 15.6H11.5L12.2 11.2Z" fill="#2c54c4"/><path d="M2.4 9.6H13" stroke="#c4d4f0" stroke-width=".8"/><ellipse cx="12.3" cy="13.3" rx="3.4" ry="2.7" fill="#12c62e"/></svg>
<div style="position:absolute;left:44px;top:104px;width:25px;height:15px;box-sizing:border-box;border:1.5px solid #4e4e4e;background:#dadada"></div>
<svg style="position:absolute;left:76.0px;top:105px" width="11" height="11" viewBox="0 0 11 11"><rect x="0.6" y="0.6" width="10" height="10" rx="1" fill="#f4f4f4" stroke="#a6a6a6" stroke-width="1.2"/><path d="M3 5.6H8.2" stroke="#4c5270" stroke-width="1.1"/></svg>
<svg style="position:absolute;left:92.3px;top:105px" width="15" height="15" viewBox="0 0 15 15"><path d="M1 0.7H5.8L6.8 2H11.5V10H1Z" fill="#6690ee" stroke="#2450d4" stroke-width="1.4"/><path d="M3 5.8H7.8L8.8 6.8H13V13.3H3Z" fill="#90b4f6" stroke="#2450d4" stroke-width="1.4"/><path d="M4 10.3H12" stroke="#d8e6ff" stroke-width="1.1"/></svg>
<div class="t" style="left:113.5px;top:105px;font-size:13px;letter-spacing:-0.66px;color:#000;font-weight:400;">ВСЕ</div>
<svg style="position:absolute;left:8px;top:124px" width="15" height="14" viewBox="0 0 15 14"><ellipse cx="7.5" cy="6.6" rx="7.4" ry="6.2" fill="#8e5424"/><ellipse cx="7.5" cy="6.4" rx="6.4" ry="5" fill="#d0a070"/><ellipse cx="7.5" cy="6.1" rx="5.9" ry="4.1" fill="#fff"/><circle cx="7.4" cy="6.1" r="3" fill="#000"/></svg>
<svg style="position:absolute;left:25.5px;top:124px" width="16" height="16" viewBox="0 0 16 16"><path d="M4 4.5C4 1.5 6.5 0.3 8.8 0.6C10.5 0.9 11 2.5 11 7" fill="none" stroke="#5066c0" stroke-width="1.4"/><circle cx="4" cy="4.2" r="1.3" fill="#3a4aa0"/><path d="M1 7.5L2.8 15.8H12.6L14.2 7.3Z" fill="#e6f0fc" stroke="#b0c4e6" stroke-width=".6"/><path d="M1.9 11.2L2.9 15.6H11.5L12.2 11.2Z" fill="#2c54c4"/><path d="M2.4 9.6H13" stroke="#c4d4f0" stroke-width=".8"/><ellipse cx="12.3" cy="13.3" rx="3.4" ry="2.7" fill="#12c62e"/></svg>
<div style="position:absolute;left:44px;top:124px;width:25px;height:15px;box-sizing:border-box;border:1.5px solid #4e4e4e;background:#dadada"></div>
<svg style="position:absolute;left:88.7px;top:125px" width="11" height="11" viewBox="0 0 11 11"><rect x="0.6" y="0.6" width="10" height="10" rx="1" fill="#f4f4f4" stroke="#a6a6a6" stroke-width="1.2"/><path d="M3 5.6H8.2" stroke="#4c5270" stroke-width="1.1"/></svg>
<svg style="position:absolute;left:105.0px;top:125px" width="15" height="15" viewBox="0 0 15 15"><path d="M1 0.7H5.8L6.8 2H11.5V10H1Z" fill="#6690ee" stroke="#2450d4" stroke-width="1.4"/><path d="M3 5.8H7.8L8.8 6.8H13V13.3H3Z" fill="#90b4f6" stroke="#2450d4" stroke-width="1.4"/><path d="M4 10.3H12" stroke="#d8e6ff" stroke-width="1.1"/></svg>
<div class="t" style="left:126.2px;top:125px;font-size:13px;letter-spacing:-0.59px;color:#000;font-weight:400;">СЛУЖЕБНЫЕ</div>
<svg style="position:absolute;left:8px;top:144px" width="15" height="14" viewBox="0 0 15 14"><ellipse cx="7.5" cy="6.6" rx="7.4" ry="6.2" fill="#8e5424"/><ellipse cx="7.5" cy="6.4" rx="6.4" ry="5" fill="#d0a070"/><ellipse cx="7.5" cy="6.1" rx="5.9" ry="4.1" fill="#fff"/><circle cx="7.4" cy="6.1" r="3" fill="#000"/></svg>
<svg style="position:absolute;left:25.5px;top:144px" width="16" height="16" viewBox="0 0 16 16"><path d="M4 4.5C4 1.5 6.5 0.3 8.8 0.6C10.5 0.9 11 2.5 11 7" fill="none" stroke="#5066c0" stroke-width="1.4"/><circle cx="4" cy="4.2" r="1.3" fill="#3a4aa0"/><path d="M1 7.5L2.8 15.8H12.6L14.2 7.3Z" fill="#e6f0fc" stroke="#b0c4e6" stroke-width=".6"/><path d="M1.9 11.2L2.9 15.6H11.5L12.2 11.2Z" fill="#2c54c4"/><path d="M2.4 9.6H13" stroke="#c4d4f0" stroke-width=".8"/><ellipse cx="12.3" cy="13.3" rx="3.4" ry="2.7" fill="#12c62e"/></svg>
<div style="position:absolute;left:44px;top:144px;width:25px;height:15px;box-sizing:border-box;border:1.5px solid #a8a8a8;background:#dedede"></div>
<svg style="position:absolute;left:101.3px;top:145px" width="11" height="11" viewBox="0 0 11 11"><rect x="0.6" y="0.6" width="10" height="10" rx="1" fill="#f4f4f4" stroke="#a6a6a6" stroke-width="1.2"/><path d="M3 5.6H8.2" stroke="#4c5270" stroke-width="1.1"/><path d="M5.6 3V8.2" stroke="#4c5270" stroke-width="1.1"/></svg>
<svg style="position:absolute;left:117.6px;top:145px" width="15" height="15" viewBox="0 0 15 15"><path d="M1 0.7H5.8L6.8 2H11.5V10H1Z" fill="#6690ee" stroke="#2450d4" stroke-width="1.4"/><path d="M3 5.8H7.8L8.8 6.8H13V13.3H3Z" fill="#90b4f6" stroke="#2450d4" stroke-width="1.4"/><path d="M4 10.3H12" stroke="#d8e6ff" stroke-width="1.1"/></svg>
<div class="t" style="left:138.8px;top:145px;font-size:13px;letter-spacing:-0.57px;color:#000;font-weight:400;">ОСОБЫЕ ЗОНЫ</div>
<svg style="position:absolute;left:8px;top:164px" width="15" height="14" viewBox="0 0 15 14"><ellipse cx="7.5" cy="6.6" rx="7.4" ry="6.2" fill="#8e5424"/><ellipse cx="7.5" cy="6.4" rx="6.4" ry="5" fill="#d0a070"/><ellipse cx="7.5" cy="6.1" rx="5.9" ry="4.1" fill="#fff"/><circle cx="7.4" cy="6.1" r="3" fill="#000"/></svg>
<svg style="position:absolute;left:25.5px;top:164px" width="16" height="16" viewBox="0 0 16 16"><path d="M4 4.5C4 1.5 6.5 0.3 8.8 0.6C10.5 0.9 11 2.5 11 7" fill="none" stroke="#5066c0" stroke-width="1.4"/><circle cx="4" cy="4.2" r="1.3" fill="#3a4aa0"/><path d="M1 7.5L2.8 15.8H12.6L14.2 7.3Z" fill="#e6f0fc" stroke="#b0c4e6" stroke-width=".6"/><path d="M1.9 11.2L2.9 15.6H11.5L12.2 11.2Z" fill="#2c54c4"/><path d="M2.4 9.6H13" stroke="#c4d4f0" stroke-width=".8"/><ellipse cx="12.3" cy="13.3" rx="3.4" ry="2.7" fill="#12c62e"/></svg>
<div style="position:absolute;left:44px;top:164px;width:25px;height:15px;box-sizing:border-box;border:1.5px solid #4e4e4e;background:#dadada"></div>
<svg style="position:absolute;left:101.3px;top:165px" width="11" height="11" viewBox="0 0 11 11"><rect x="0.6" y="0.6" width="10" height="10" rx="1" fill="#f4f4f4" stroke="#a6a6a6" stroke-width="1.2"/><path d="M3 5.6H8.2" stroke="#4c5270" stroke-width="1.1"/><path d="M5.6 3V8.2" stroke="#4c5270" stroke-width="1.1"/></svg>
<svg style="position:absolute;left:117.6px;top:165px" width="15" height="15" viewBox="0 0 15 15"><path d="M1 0.7H5.8L6.8 2H11.5V10H1Z" fill="#6690ee" stroke="#2450d4" stroke-width="1.4"/><path d="M3 5.8H7.8L8.8 6.8H13V13.3H3Z" fill="#90b4f6" stroke="#2450d4" stroke-width="1.4"/><path d="M4 10.3H12" stroke="#d8e6ff" stroke-width="1.1"/></svg>
<div class="t" style="left:138.8px;top:165px;font-size:13px;letter-spacing:0.04px;color:#000;font-weight:400;">РЕЗУЛЬТАТ</div>
<svg style="position:absolute;left:8px;top:184px" width="15" height="14" viewBox="0 0 15 14"><ellipse cx="7.5" cy="6.6" rx="7.4" ry="6.2" fill="#8e5424"/><ellipse cx="7.5" cy="6.4" rx="6.4" ry="5" fill="#d0a070"/><ellipse cx="7.5" cy="6.1" rx="5.9" ry="4.1" fill="#fff"/><circle cx="7.4" cy="6.1" r="3" fill="#000"/></svg>
<svg style="position:absolute;left:25.5px;top:184px" width="16" height="16" viewBox="0 0 16 16"><path d="M4 4.5C4 1.5 6.5 0.3 8.8 0.6C10.5 0.9 11 2.5 11 7" fill="none" stroke="#5066c0" stroke-width="1.4"/><circle cx="4" cy="4.2" r="1.3" fill="#3a4aa0"/><path d="M1 7.5L2.8 15.8H12.6L14.2 7.3Z" fill="#e6f0fc" stroke="#b0c4e6" stroke-width=".6"/><path d="M1.9 11.2L2.9 15.6H11.5L12.2 11.2Z" fill="#2c54c4"/><path d="M2.4 9.6H13" stroke="#c4d4f0" stroke-width=".8"/><ellipse cx="12.3" cy="13.3" rx="3.4" ry="2.7" fill="#12c62e"/></svg>
<div style="position:absolute;left:44px;top:184px;width:25px;height:15px;box-sizing:border-box;border:1.5px solid #4e4e4e;background:#dadada"></div>
<svg style="position:absolute;left:88.7px;top:185px" width="11" height="11" viewBox="0 0 11 11"><rect x="0.6" y="0.6" width="10" height="10" rx="1" fill="#f4f4f4" stroke="#a6a6a6" stroke-width="1.2"/><path d="M3 5.6H8.2" stroke="#4c5270" stroke-width="1.1"/></svg>
<svg style="position:absolute;left:105.0px;top:185px" width="15" height="15" viewBox="0 0 15 15"><path d="M1 0.7H5.8L6.8 2H11.5V10H1Z" fill="#6690ee" stroke="#2450d4" stroke-width="1.4"/><path d="M3 5.8H7.8L8.8 6.8H13V13.3H3Z" fill="#90b4f6" stroke="#2450d4" stroke-width="1.4"/><path d="M4 10.3H12" stroke="#d8e6ff" stroke-width="1.1"/></svg>
<div class="t" style="left:126.2px;top:185px;font-size:13px;letter-spacing:-0.31px;color:#000;font-weight:400;">ПОЛЬЗОВАТЕЛЬСКИЕ</div>
<svg style="position:absolute;left:8px;top:204px" width="15" height="14" viewBox="0 0 15 14"><ellipse cx="7.5" cy="6.6" rx="7.4" ry="6.2" fill="#8e5424"/><ellipse cx="7.5" cy="6.4" rx="6.4" ry="5" fill="#d0a070"/><ellipse cx="7.5" cy="6.1" rx="5.9" ry="4.1" fill="#fff"/><circle cx="7.4" cy="6.1" r="3" fill="#000"/></svg>
<svg style="position:absolute;left:25.5px;top:204px" width="16" height="16" viewBox="0 0 16 16"><path d="M4 4.5C4 1.5 6.5 0.3 8.8 0.6C10.5 0.9 11 2.5 11 7" fill="none" stroke="#5066c0" stroke-width="1.4"/><circle cx="4" cy="4.2" r="1.3" fill="#3a4aa0"/><path d="M1 7.5L2.8 15.8H12.6L14.2 7.3Z" fill="#e6f0fc" stroke="#b0c4e6" stroke-width=".6"/><path d="M1.9 11.2L2.9 15.6H11.5L12.2 11.2Z" fill="#2c54c4"/><path d="M2.4 9.6H13" stroke="#c4d4f0" stroke-width=".8"/><ellipse cx="12.3" cy="13.3" rx="3.4" ry="2.7" fill="#12c62e"/></svg>
<div style="position:absolute;left:44px;top:204px;width:25px;height:15px;box-sizing:border-box;border:1.5px solid #4e4e4e;background:#dadada"></div>
<svg style="position:absolute;left:101.3px;top:205px" width="11" height="11" viewBox="0 0 11 11"><rect x="0.6" y="0.6" width="10" height="10" rx="1" fill="#f4f4f4" stroke="#a6a6a6" stroke-width="1.2"/><path d="M3 5.6H8.2" stroke="#4c5270" stroke-width="1.1"/></svg>
<svg style="position:absolute;left:117.6px;top:205px" width="15" height="15" viewBox="0 0 15 15"><path d="M1 0.7H5.8L6.8 2H11.5V10H1Z" fill="#6690ee" stroke="#2450d4" stroke-width="1.4"/><path d="M3 5.8H7.8L8.8 6.8H13V13.3H3Z" fill="#90b4f6" stroke="#2450d4" stroke-width="1.4"/><path d="M4 10.3H12" stroke="#d8e6ff" stroke-width="1.1"/></svg>
<div class="t" style="left:138.8px;top:205px;font-size:13px;letter-spacing:0.1px;color:#000;font-weight:400;">Слой 1</div>
<svg style="position:absolute;left:8px;top:224px" width="15" height="14" viewBox="0 0 15 14"><ellipse cx="7.5" cy="6.6" rx="7.4" ry="6.2" fill="#8e5424"/><ellipse cx="7.5" cy="6.4" rx="6.4" ry="5" fill="#d0a070"/><ellipse cx="7.5" cy="6.1" rx="5.9" ry="4.1" fill="#fff"/><circle cx="7.4" cy="6.1" r="3" fill="#000"/></svg>
<svg style="position:absolute;left:25.5px;top:224px" width="16" height="16" viewBox="0 0 16 16"><path d="M4 4.5C4 1.5 6.5 0.3 8.8 0.6C10.5 0.9 11 2.5 11 7" fill="none" stroke="#5066c0" stroke-width="1.4"/><circle cx="4" cy="4.2" r="1.3" fill="#3a4aa0"/><path d="M1 7.5L2.8 15.8H12.6L14.2 7.3Z" fill="#e6f0fc" stroke="#b0c4e6" stroke-width=".6"/><path d="M1.9 11.2L2.9 15.6H11.5L12.2 11.2Z" fill="#2c54c4"/><path d="M2.4 9.6H13" stroke="#c4d4f0" stroke-width=".8"/><ellipse cx="12.3" cy="13.3" rx="3.4" ry="2.7" fill="#12c62e"/></svg>
<div style="position:absolute;left:44px;top:224px;width:25px;height:15px;box-sizing:border-box;border:1.5px solid #4e4e4e;background:#dadada"></div>
<svg style="position:absolute;left:130.3px;top:223.5px" width="15" height="15" viewBox="0 0 15 15"><path d="M0 2V0H2M13 0H15V2M0 13V15H2M15 13V15H13" fill="none" stroke="#222" stroke-width="1.6"/><ellipse cx="4.6" cy="7.5" rx="3.4" ry="4.5" fill="#1010e8"/><path d="M3.6 5.5V8" stroke="#d8d8ff" stroke-width="1"/><path d="M11.3 2.4L14 7H8.6Z" fill="#f0c020" stroke="#b08010" stroke-width=".6"/><circle cx="10.8" cy="9.7" r="2.5" fill="#f01010"/></svg>
<div class="t" style="left:152.3px;top:225px;font-size:13px;letter-spacing:0.55px;color:#bdbdbd;font-weight:400;">&lt;Группа по умолчанию&gt;</div>
<svg style="position:absolute;left:8px;top:244px" width="15" height="14" viewBox="0 0 15 14"><ellipse cx="7.5" cy="6.6" rx="7.4" ry="6.2" fill="#8e5424"/><ellipse cx="7.5" cy="6.4" rx="6.4" ry="5" fill="#d0a070"/><ellipse cx="7.5" cy="6.1" rx="5.9" ry="4.1" fill="#fff"/><circle cx="7.4" cy="6.1" r="3" fill="#000"/></svg>
<svg style="position:absolute;left:25.5px;top:244px" width="16" height="16" viewBox="0 0 16 16"><path d="M4 4.5C4 1.5 6.5 0.3 8.8 0.6C10.5 0.9 11 2.5 11 7" fill="none" stroke="#5066c0" stroke-width="1.4"/><circle cx="4" cy="4.2" r="1.3" fill="#3a4aa0"/><path d="M1 7.5L2.8 15.8H12.6L14.2 7.3Z" fill="#e6f0fc" stroke="#b0c4e6" stroke-width=".6"/><path d="M1.9 11.2L2.9 15.6H11.5L12.2 11.2Z" fill="#2c54c4"/><path d="M2.4 9.6H13" stroke="#c4d4f0" stroke-width=".8"/><ellipse cx="12.3" cy="13.3" rx="3.4" ry="2.7" fill="#12c62e"/></svg>
<div style="position:absolute;left:44px;top:244px;width:25px;height:15px;box-sizing:border-box;border:1.5px solid #4e4e4e;background:#dadada"></div>
<svg style="position:absolute;left:101.3px;top:245px" width="11" height="11" viewBox="0 0 11 11"><rect x="0.6" y="0.6" width="10" height="10" rx="1" fill="#f4f4f4" stroke="#a6a6a6" stroke-width="1.2"/><path d="M3 5.6H8.2" stroke="#4c5270" stroke-width="1.1"/></svg>
<svg style="position:absolute;left:117.6px;top:245px" width="15" height="15" viewBox="0 0 15 15"><path d="M1 0.7H5.8L6.8 2H11.5V10H1Z" fill="#6690ee" stroke="#2450d4" stroke-width="1.4"/><path d="M3 5.8H7.8L8.8 6.8H13V13.3H3Z" fill="#90b4f6" stroke="#2450d4" stroke-width="1.4"/><path d="M4 10.3H12" stroke="#d8e6ff" stroke-width="1.1"/></svg>
<div class="t" style="left:138.8px;top:245px;font-size:13px;letter-spacing:0.65px;color:#000;font-weight:400;">Кадастровый план территор...</div>
<svg style="position:absolute;left:8px;top:264px" width="15" height="14" viewBox="0 0 15 14"><ellipse cx="7.5" cy="6.6" rx="7.4" ry="6.2" fill="#8e5424"/><ellipse cx="7.5" cy="6.4" rx="6.4" ry="5" fill="#d0a070"/><ellipse cx="7.5" cy="6.1" rx="5.9" ry="4.1" fill="#fff"/><circle cx="7.4" cy="6.1" r="3" fill="#000"/></svg>
<svg style="position:absolute;left:25.5px;top:264px" width="16" height="16" viewBox="0 0 16 16"><path d="M4 4.5C4 1.5 6.5 0.3 8.8 0.6C10.5 0.9 11 2.5 11 7" fill="none" stroke="#5066c0" stroke-width="1.4"/><circle cx="4" cy="4.2" r="1.3" fill="#3a4aa0"/><path d="M1 7.5L2.8 15.8H12.6L14.2 7.3Z" fill="#e6f0fc" stroke="#b0c4e6" stroke-width=".6"/><path d="M1.9 11.2L2.9 15.6H11.5L12.2 11.2Z" fill="#2c54c4"/><path d="M2.4 9.6H13" stroke="#c4d4f0" stroke-width=".8"/><ellipse cx="12.3" cy="13.3" rx="3.4" ry="2.7" fill="#12c62e"/></svg>
<div style="position:absolute;left:44px;top:264px;width:25px;height:15px;box-sizing:border-box;border:1.5px solid #b03030;background:#fff"></div>
<svg style="position:absolute;left:114.0px;top:265px" width="11" height="11" viewBox="0 0 11 11"><rect x="0.6" y="0.6" width="10" height="10" rx="1" fill="#f4f4f4" stroke="#a6a6a6" stroke-width="1.2"/><path d="M3 5.6H8.2" stroke="#4c5270" stroke-width="1.1"/></svg>
<svg style="position:absolute;left:130.3px;top:265px" width="15" height="15" viewBox="0 0 15 15"><path d="M1 0.7H5.8L6.8 2H11.5V10H1Z" fill="#6690ee" stroke="#2450d4" stroke-width="1.4"/><path d="M3 5.8H7.8L8.8 6.8H13V13.3H3Z" fill="#90b4f6" stroke="#2450d4" stroke-width="1.4"/><path d="M4 10.3H12" stroke="#d8e6ff" stroke-width="1.1"/></svg>
<div class="t" style="left:151.5px;top:265px;font-size:13px;letter-spacing:0.51px;color:#000;font-weight:400;">Границы</div>
<svg style="position:absolute;left:8px;top:284px" width="15" height="14" viewBox="0 0 15 14"><ellipse cx="7.5" cy="6.6" rx="7.4" ry="6.2" fill="#8e5424"/><ellipse cx="7.5" cy="6.4" rx="6.4" ry="5" fill="#d0a070"/><ellipse cx="7.5" cy="6.1" rx="5.9" ry="4.1" fill="#fff"/><circle cx="7.4" cy="6.1" r="3" fill="#000"/></svg>
<svg style="position:absolute;left:25.5px;top:284px" width="16" height="16" viewBox="0 0 16 16"><path d="M4 4.5C4 1.5 6.5 0.3 8.8 0.6C10.5 0.9 11 2.5 11 7" fill="none" stroke="#5066c0" stroke-width="1.4"/><circle cx="4" cy="4.2" r="1.3" fill="#3a4aa0"/><path d="M1 7.5L2.8 15.8H12.6L14.2 7.3Z" fill="#e6f0fc" stroke="#b0c4e6" stroke-width=".6"/><path d="M1.9 11.2L2.9 15.6H11.5L12.2 11.2Z" fill="#2c54c4"/><path d="M2.4 9.6H13" stroke="#c4d4f0" stroke-width=".8"/><ellipse cx="12.3" cy="13.3" rx="3.4" ry="2.7" fill="#12c62e"/></svg>
<div style="position:absolute;left:44px;top:284px;width:25px;height:15px;box-sizing:border-box;border:1.5px solid #4e4e4e;background:#dadada"></div>
<svg style="position:absolute;left:143.0px;top:283.5px" width="15" height="15" viewBox="0 0 15 15"><path d="M0 2V0H2M13 0H15V2M0 13V15H2M15 13V15H13" fill="none" stroke="#222" stroke-width="1.6"/><ellipse cx="4.6" cy="7.5" rx="3.4" ry="4.5" fill="#1010e8"/><path d="M3.6 5.5V8" stroke="#d8d8ff" stroke-width="1"/><path d="M11.3 2.4L14 7H8.6Z" fill="#f0c020" stroke="#b08010" stroke-width=".6"/><circle cx="10.8" cy="9.7" r="2.5" fill="#f01010"/></svg>
<div class="t" style="left:165.0px;top:285px;font-size:13px;letter-spacing:0.55px;color:#bdbdbd;font-weight:400;">&lt;Группа по умолчанию&gt;</div>
<svg style="position:absolute;left:8px;top:304px" width="15" height="14" viewBox="0 0 15 14"><ellipse cx="7.5" cy="6.6" rx="7.4" ry="6.2" fill="#8e5424"/><ellipse cx="7.5" cy="6.4" rx="6.4" ry="5" fill="#d0a070"/><ellipse cx="7.5" cy="6.1" rx="5.9" ry="4.1" fill="#fff"/><circle cx="7.4" cy="6.1" r="3" fill="#000"/></svg>
<svg style="position:absolute;left:25.5px;top:304px" width="16" height="16" viewBox="0 0 16 16"><path d="M4 4.5C4 1.5 6.5 0.3 8.8 0.6C10.5 0.9 11 2.5 11 7" fill="none" stroke="#5066c0" stroke-width="1.4"/><circle cx="4" cy="4.2" r="1.3" fill="#3a4aa0"/><path d="M1 7.5L2.8 15.8H12.6L14.2 7.3Z" fill="#e6f0fc" stroke="#b0c4e6" stroke-width=".6"/><path d="M1.9 11.2L2.9 15.6H11.5L12.2 11.2Z" fill="#2c54c4"/><path d="M2.4 9.6H13" stroke="#c4d4f0" stroke-width=".8"/><ellipse cx="12.3" cy="13.3" rx="3.4" ry="2.7" fill="#12c62e"/></svg>
<div style="position:absolute;left:44px;top:304px;width:25px;height:15px;box-sizing:border-box;border:1.5px solid #4e4e4e;background:#dadada"></div>
<svg style="position:absolute;left:143.0px;top:303.5px" width="15" height="15" viewBox="0 0 15 15"><path d="M0 2V0H2M13 0H15V2M0 13V15H2M15 13V15H13" fill="none" stroke="#222" stroke-width="1.6"/><ellipse cx="4.6" cy="7.5" rx="3.4" ry="4.5" fill="#1010e8"/><path d="M3.6 5.5V8" stroke="#d8d8ff" stroke-width="1"/><path d="M11.3 2.4L14 7H8.6Z" fill="#f0c020" stroke="#b08010" stroke-width=".6"/><circle cx="10.8" cy="9.7" r="2.5" fill="#f01010"/></svg>
<div class="t" style="left:165.0px;top:305px;font-size:13px;letter-spacing:0.49px;color:#bdbdbd;font-weight:400;">Граница муниципальног...</div>
<svg style="position:absolute;left:8px;top:324px" width="15" height="14" viewBox="0 0 15 14"><ellipse cx="7.5" cy="6.6" rx="7.4" ry="6.2" fill="#8e5424"/><ellipse cx="7.5" cy="6.4" rx="6.4" ry="5" fill="#d0a070"/><ellipse cx="7.5" cy="6.1" rx="5.9" ry="4.1" fill="#fff"/><circle cx="7.4" cy="6.1" r="3" fill="#000"/></svg>
<svg style="position:absolute;left:25.5px;top:324px" width="16" height="16" viewBox="0 0 16 16"><path d="M4 4.5C4 1.5 6.5 0.3 8.8 0.6C10.5 0.9 11 2.5 11 7" fill="none" stroke="#5066c0" stroke-width="1.4"/><circle cx="4" cy="4.2" r="1.3" fill="#3a4aa0"/><path d="M1 7.5L2.8 15.8H12.6L14.2 7.3Z" fill="#e6f0fc" stroke="#b0c4e6" stroke-width=".6"/><path d="M1.9 11.2L2.9 15.6H11.5L12.2 11.2Z" fill="#2c54c4"/><path d="M2.4 9.6H13" stroke="#c4d4f0" stroke-width=".8"/><ellipse cx="12.3" cy="13.3" rx="3.4" ry="2.7" fill="#12c62e"/></svg>
<div style="position:absolute;left:44px;top:324px;width:25px;height:15px;box-sizing:border-box;border:1.5px solid #4e4e4e;background:#dadada"></div>
<svg style="position:absolute;left:143.0px;top:323.5px" width="15" height="15" viewBox="0 0 15 15"><path d="M0 2V0H2M13 0H15V2M0 13V15H2M15 13V15H13" fill="none" stroke="#222" stroke-width="1.6"/><ellipse cx="4.6" cy="7.5" rx="3.4" ry="4.5" fill="#1010e8"/><path d="M3.6 5.5V8" stroke="#d8d8ff" stroke-width="1"/><path d="M11.3 2.4L14 7H8.6Z" fill="#f0c020" stroke="#b08010" stroke-width=".6"/><circle cx="10.8" cy="9.7" r="2.5" fill="#f01010"/></svg>
<div class="t" style="left:165.0px;top:325px;font-size:13px;letter-spacing:0.49px;color:#bdbdbd;font-weight:400;">Граница муниципальног...</div>
<svg style="position:absolute;left:8px;top:344px" width="15" height="14" viewBox="0 0 15 14"><ellipse cx="7.5" cy="6.6" rx="7.4" ry="6.2" fill="#8e5424"/><ellipse cx="7.5" cy="6.4" rx="6.4" ry="5" fill="#d0a070"/><ellipse cx="7.5" cy="6.1" rx="5.9" ry="4.1" fill="#fff"/><circle cx="7.4" cy="6.1" r="3" fill="#000"/></svg>
<svg style="position:absolute;left:25.5px;top:344px" width="16" height="16" viewBox="0 0 16 16"><path d="M4 4.5C4 1.5 6.5 0.3 8.8 0.6C10.5 0.9 11 2.5 11 7" fill="none" stroke="#5066c0" stroke-width="1.4"/><circle cx="4" cy="4.2" r="1.3" fill="#3a4aa0"/><path d="M1 7.5L2.8 15.8H12.6L14.2 7.3Z" fill="#e6f0fc" stroke="#b0c4e6" stroke-width=".6"/><path d="M1.9 11.2L2.9 15.6H11.5L12.2 11.2Z" fill="#2c54c4"/><path d="M2.4 9.6H13" stroke="#c4d4f0" stroke-width=".8"/><ellipse cx="12.3" cy="13.3" rx="3.4" ry="2.7" fill="#12c62e"/></svg>
<div style="position:absolute;left:44px;top:344px;width:25px;height:15px;box-sizing:border-box;border:1.5px solid #4e4e4e;background:#dadada"></div>
<svg style="position:absolute;left:143.0px;top:343.5px" width="15" height="15" viewBox="0 0 15 15"><path d="M0 2V0H2M13 0H15V2M0 13V15H2M15 13V15H13" fill="none" stroke="#222" stroke-width="1.6"/><ellipse cx="4.6" cy="7.5" rx="3.4" ry="4.5" fill="#1010e8"/><path d="M3.6 5.5V8" stroke="#d8d8ff" stroke-width="1"/><path d="M11.3 2.4L14 7H8.6Z" fill="#f0c020" stroke="#b08010" stroke-width=".6"/><circle cx="10.8" cy="9.7" r="2.5" fill="#f01010"/></svg>
<div class="t" style="left:165.0px;top:345px;font-size:13px;letter-spacing:0px;color:#bdbdbd;font-weight:400;"></div>
<svg style="position:absolute;left:8px;top:364px" width="15" height="14" viewBox="0 0 15 14"><ellipse cx="7.5" cy="6.6" rx="7.4" ry="6.2" fill="#8e5424"/><ellipse cx="7.5" cy="6.4" rx="6.4" ry="5" fill="#d0a070"/><ellipse cx="7.5" cy="6.1" rx="5.9" ry="4.1" fill="#fff"/><circle cx="7.4" cy="6.1" r="3" fill="#000"/></svg>
<svg style="position:absolute;left:25.5px;top:364px" width="16" height="16" viewBox="0 0 16 16"><path d="M4 4.5C4 1.5 6.5 0.3 8.8 0.6C10.5 0.9 11 2.5 11 7" fill="none" stroke="#5066c0" stroke-width="1.4"/><circle cx="4" cy="4.2" r="1.3" fill="#3a4aa0"/><path d="M1 7.5L2.8 15.8H12.6L14.2 7.3Z" fill="#e6f0fc" stroke="#b0c4e6" stroke-width=".6"/><path d="M1.9 11.2L2.9 15.6H11.5L12.2 11.2Z" fill="#2c54c4"/><path d="M2.4 9.6H13" stroke="#c4d4f0" stroke-width=".8"/><ellipse cx="12.3" cy="13.3" rx="3.4" ry="2.7" fill="#12c62e"/></svg>
<div style="position:absolute;left:44px;top:364px;width:25px;height:15px;box-sizing:border-box;border:1.5px solid #4e4e4e;background:#dadada"></div>
<svg style="position:absolute;left:114.0px;top:365px" width="11" height="11" viewBox="0 0 11 11"><rect x="0.6" y="0.6" width="10" height="10" rx="1" fill="#f4f4f4" stroke="#a6a6a6" stroke-width="1.2"/><path d="M3 5.6H8.2" stroke="#4c5270" stroke-width="1.1"/></svg>
<svg style="position:absolute;left:130.3px;top:365px" width="15" height="15" viewBox="0 0 15 15"><path d="M1 0.7H5.8L6.8 2H11.5V10H1Z" fill="#6690ee" stroke="#2450d4" stroke-width="1.4"/><path d="M3 5.8H7.8L8.8 6.8H13V13.3H3Z" fill="#90b4f6" stroke="#2450d4" stroke-width="1.4"/><path d="M4 10.3H12" stroke="#d8e6ff" stroke-width="1.1"/></svg>
<div class="t" style="left:151.5px;top:365px;font-size:13px;letter-spacing:0.26px;color:#000;font-weight:400;">Здания</div>
<svg style="position:absolute;left:8px;top:384px" width="15" height="14" viewBox="0 0 15 14"><ellipse cx="7.5" cy="6.6" rx="7.4" ry="6.2" fill="#8e5424"/><ellipse cx="7.5" cy="6.4" rx="6.4" ry="5" fill="#d0a070"/><ellipse cx="7.5" cy="6.1" rx="5.9" ry="4.1" fill="#fff"/><circle cx="7.4" cy="6.1" r="3" fill="#000"/></svg>
<svg style="position:absolute;left:25.5px;top:384px" width="16" height="16" viewBox="0 0 16 16"><path d="M4 4.5C4 1.5 6.5 0.3 8.8 0.6C10.5 0.9 11 2.5 11 7" fill="none" stroke="#5066c0" stroke-width="1.4"/><circle cx="4" cy="4.2" r="1.3" fill="#3a4aa0"/><path d="M1 7.5L2.8 15.8H12.6L14.2 7.3Z" fill="#e6f0fc" stroke="#b0c4e6" stroke-width=".6"/><path d="M1.9 11.2L2.9 15.6H11.5L12.2 11.2Z" fill="#2c54c4"/><path d="M2.4 9.6H13" stroke="#c4d4f0" stroke-width=".8"/><ellipse cx="12.3" cy="13.3" rx="3.4" ry="2.7" fill="#12c62e"/></svg>
<div style="position:absolute;left:44px;top:384px;width:25px;height:15px;box-sizing:border-box;border:1.5px solid #4e4e4e;background:#dadada"></div>
<svg style="position:absolute;left:143.0px;top:383.5px" width="15" height="15" viewBox="0 0 15 15"><path d="M0 2V0H2M13 0H15V2M0 13V15H2M15 13V15H13" fill="none" stroke="#222" stroke-width="1.6"/><ellipse cx="4.6" cy="7.5" rx="3.4" ry="4.5" fill="#1010e8"/><path d="M3.6 5.5V8" stroke="#d8d8ff" stroke-width="1"/><path d="M11.3 2.4L14 7H8.6Z" fill="#f0c020" stroke="#b08010" stroke-width=".6"/><circle cx="10.8" cy="9.7" r="2.5" fill="#f01010"/></svg>
<div class="t" style="left:165.0px;top:385px;font-size:13px;letter-spacing:0.55px;color:#bdbdbd;font-weight:400;">&lt;Группа по умолчанию&gt;</div>
<svg style="position:absolute;left:8px;top:404px" width="15" height="14" viewBox="0 0 15 14"><ellipse cx="7.5" cy="6.6" rx="7.4" ry="6.2" fill="#8e5424"/><ellipse cx="7.5" cy="6.4" rx="6.4" ry="5" fill="#d0a070"/><ellipse cx="7.5" cy="6.1" rx="5.9" ry="4.1" fill="#fff"/><circle cx="7.4" cy="6.1" r="3" fill="#000"/></svg>
<svg style="position:absolute;left:25.5px;top:404px" width="16" height="16" viewBox="0 0 16 16"><path d="M4 4.5C4 1.5 6.5 0.3 8.8 0.6C10.5 0.9 11 2.5 11 7" fill="none" stroke="#5066c0" stroke-width="1.4"/><circle cx="4" cy="4.2" r="1.3" fill="#3a4aa0"/><path d="M1 7.5L2.8 15.8H12.6L14.2 7.3Z" fill="#e6f0fc" stroke="#b0c4e6" stroke-width=".6"/><path d="M1.9 11.2L2.9 15.6H11.5L12.2 11.2Z" fill="#2c54c4"/><path d="M2.4 9.6H13" stroke="#c4d4f0" stroke-width=".8"/><ellipse cx="12.3" cy="13.3" rx="3.4" ry="2.7" fill="#12c62e"/></svg>
<div style="position:absolute;left:44px;top:404px;width:25px;height:15px;box-sizing:border-box;border:1.5px solid #4e4e4e;background:#dadada"></div>
<svg style="position:absolute;left:114.0px;top:405px" width="11" height="11" viewBox="0 0 11 11"><rect x="0.6" y="0.6" width="10" height="10" rx="1" fill="#f4f4f4" stroke="#a6a6a6" stroke-width="1.2"/><path d="M3 5.6H8.2" stroke="#4c5270" stroke-width="1.1"/></svg>
<svg style="position:absolute;left:130.3px;top:405px" width="15" height="15" viewBox="0 0 15 15"><path d="M1 0.7H5.8L6.8 2H11.5V10H1Z" fill="#6690ee" stroke="#2450d4" stroke-width="1.4"/><path d="M3 5.8H7.8L8.8 6.8H13V13.3H3Z" fill="#90b4f6" stroke="#2450d4" stroke-width="1.4"/><path d="M4 10.3H12" stroke="#d8e6ff" stroke-width="1.1"/></svg>
<div class="t" style="left:151.5px;top:405px;font-size:13px;letter-spacing:0.33px;color:#000;font-weight:400;">Сооружения</div>
<svg style="position:absolute;left:8px;top:424px" width="15" height="14" viewBox="0 0 15 14"><ellipse cx="7.5" cy="6.6" rx="7.4" ry="6.2" fill="#8e5424"/><ellipse cx="7.5" cy="6.4" rx="6.4" ry="5" fill="#d0a070"/><ellipse cx="7.5" cy="6.1" rx="5.9" ry="4.1" fill="#fff"/><circle cx="7.4" cy="6.1" r="3" fill="#000"/></svg>
<svg style="position:absolute;left:25.5px;top:424px" width="16" height="16" viewBox="0 0 16 16"><path d="M4 4.5C4 1.5 6.5 0.3 8.8 0.6C10.5 0.9 11 2.5 11 7" fill="none" stroke="#5066c0" stroke-width="1.4"/><circle cx="4" cy="4.2" r="1.3" fill="#3a4aa0"/><path d="M1 7.5L2.8 15.8H12.6L14.2 7.3Z" fill="#e6f0fc" stroke="#b0c4e6" stroke-width=".6"/><path d="M1.9 11.2L2.9 15.6H11.5L12.2 11.2Z" fill="#2c54c4"/><path d="M2.4 9.6H13" stroke="#c4d4f0" stroke-width=".8"/><ellipse cx="12.3" cy="13.3" rx="3.4" ry="2.7" fill="#12c62e"/></svg>
<div style="position:absolute;left:44px;top:424px;width:25px;height:15px;box-sizing:border-box;border:1.5px solid #4e4e4e;background:#dadada"></div>
<svg style="position:absolute;left:143.0px;top:423.5px" width="15" height="15" viewBox="0 0 15 15"><path d="M0 2V0H2M13 0H15V2M0 13V15H2M15 13V15H13" fill="none" stroke="#222" stroke-width="1.6"/><ellipse cx="4.6" cy="7.5" rx="3.4" ry="4.5" fill="#1010e8"/><path d="M3.6 5.5V8" stroke="#d8d8ff" stroke-width="1"/><path d="M11.3 2.4L14 7H8.6Z" fill="#f0c020" stroke="#b08010" stroke-width=".6"/><circle cx="10.8" cy="9.7" r="2.5" fill="#f01010"/></svg>
<div class="t" style="left:165.0px;top:425px;font-size:13px;letter-spacing:0.55px;color:#bdbdbd;font-weight:400;">&lt;Группа по умолчанию&gt;</div>
<svg style="position:absolute;left:8px;top:444px" width="15" height="14" viewBox="0 0 15 14"><ellipse cx="7.5" cy="6.6" rx="7.4" ry="6.2" fill="#8e5424"/><ellipse cx="7.5" cy="6.4" rx="6.4" ry="5" fill="#d0a070"/><ellipse cx="7.5" cy="6.1" rx="5.9" ry="4.1" fill="#fff"/><circle cx="7.4" cy="6.1" r="3" fill="#000"/></svg>
<svg style="position:absolute;left:25.5px;top:444px" width="16" height="16" viewBox="0 0 16 16"><path d="M4 4.5C4 1.5 6.5 0.3 8.8 0.6C10.5 0.9 11 2.5 11 7" fill="none" stroke="#5066c0" stroke-width="1.4"/><circle cx="4" cy="4.2" r="1.3" fill="#3a4aa0"/><path d="M1 7.5L2.8 15.8H12.6L14.2 7.3Z" fill="#e6f0fc" stroke="#b0c4e6" stroke-width=".6"/><path d="M1.9 11.2L2.9 15.6H11.5L12.2 11.2Z" fill="#2c54c4"/><path d="M2.4 9.6H13" stroke="#c4d4f0" stroke-width=".8"/><ellipse cx="12.3" cy="13.3" rx="3.4" ry="2.7" fill="#12c62e"/></svg>
<svg style="position:absolute;left:44px;top:444px" width="25" height="15" viewBox="0 0 25 15"><clipPath id="hc"><rect x="0" y="0" width="25" height="15"/></clipPath><g clip-path="url(#hc)"><rect x="0" y="0" width="25" height="15" fill="#fff"/><path d="M-10 0L4 14" stroke="#d03838" stroke-width="1.1"/><path d="M-3 0L11 14" stroke="#d03838" stroke-width="1.1"/><path d="M4 0L18 14" stroke="#d03838" stroke-width="1.1"/><path d="M11 0L25 14" stroke="#d03838" stroke-width="1.1"/><path d="M18 0L32 14" stroke="#d03838" stroke-width="1.1"/><path d="M25 0L39 14" stroke="#d03838" stroke-width="1.1"/></g><rect x="0.75" y="0.75" width="23.5" height="13.5" fill="none" stroke="#b03030" stroke-width="1.5"/></svg>
<svg style="position:absolute;left:114.0px;top:445px" width="11" height="11" viewBox="0 0 11 11"><rect x="0.6" y="0.6" width="10" height="10" rx="1" fill="#f4f4f4" stroke="#a6a6a6" stroke-width="1.2"/><path d="M3 5.6H8.2" stroke="#4c5270" stroke-width="1.1"/></svg>
<svg style="position:absolute;left:130.3px;top:445px" width="15" height="15" viewBox="0 0 15 15"><path d="M1 0.7H5.8L6.8 2H11.5V10H1Z" fill="#6690ee" stroke="#2450d4" stroke-width="1.4"/><path d="M3 5.8H7.8L8.8 6.8H13V13.3H3Z" fill="#90b4f6" stroke="#2450d4" stroke-width="1.4"/><path d="M4 10.3H12" stroke="#d8e6ff" stroke-width="1.1"/></svg>
<div class="t" style="left:151.5px;top:445px;font-size:13px;letter-spacing:0.2px;color:#000;font-weight:400;">Особые зоны</div>
<svg style="position:absolute;left:8px;top:464px" width="15" height="14" viewBox="0 0 15 14"><ellipse cx="7.5" cy="6.6" rx="7.4" ry="6.2" fill="#8e5424"/><ellipse cx="7.5" cy="6.4" rx="6.4" ry="5" fill="#d0a070"/><ellipse cx="7.5" cy="6.1" rx="5.9" ry="4.1" fill="#fff"/><circle cx="7.4" cy="6.1" r="3" fill="#000"/></svg>
<svg style="position:absolute;left:25.5px;top:464px" width="16" height="16" viewBox="0 0 16 16"><path d="M4 4.5C4 1.5 6.5 0.3 8.8 0.6C10.5 0.9 11 2.5 11 7" fill="none" stroke="#5066c0" stroke-width="1.4"/><circle cx="4" cy="4.2" r="1.3" fill="#3a4aa0"/><path d="M1 7.5L2.8 15.8H12.6L14.2 7.3Z" fill="#e6f0fc" stroke="#b0c4e6" stroke-width=".6"/><path d="M1.9 11.2L2.9 15.6H11.5L12.2 11.2Z" fill="#2c54c4"/><path d="M2.4 9.6H13" stroke="#c4d4f0" stroke-width=".8"/><ellipse cx="12.3" cy="13.3" rx="3.4" ry="2.7" fill="#12c62e"/></svg>
<div style="position:absolute;left:44px;top:464px;width:25px;height:15px;box-sizing:border-box;border:1.5px solid #4e4e4e;background:#dadada"></div>
<svg style="position:absolute;left:143.0px;top:463.5px" width="15" height="15" viewBox="0 0 15 15"><path d="M0 2V0H2M13 0H15V2M0 13V15H2M15 13V15H13" fill="none" stroke="#222" stroke-width="1.6"/><ellipse cx="4.6" cy="7.5" rx="3.4" ry="4.5" fill="#1010e8"/><path d="M3.6 5.5V8" stroke="#d8d8ff" stroke-width="1"/><path d="M11.3 2.4L14 7H8.6Z" fill="#f0c020" stroke="#b08010" stroke-width=".6"/><circle cx="10.8" cy="9.7" r="2.5" fill="#f01010"/></svg>
<div class="t" style="left:165.0px;top:465px;font-size:13px;letter-spacing:0.55px;color:#bdbdbd;font-weight:400;">&lt;Группа по умолчанию&gt;</div>
<svg style="position:absolute;left:8px;top:484px" width="15" height="14" viewBox="0 0 15 14"><ellipse cx="7.5" cy="6.6" rx="7.4" ry="6.2" fill="#8e5424"/><ellipse cx="7.5" cy="6.4" rx="6.4" ry="5" fill="#d0a070"/><ellipse cx="7.5" cy="6.1" rx="5.9" ry="4.1" fill="#fff"/><circle cx="7.4" cy="6.1" r="3" fill="#000"/></svg>
<svg style="position:absolute;left:25.5px;top:484px" width="16" height="16" viewBox="0 0 16 16"><path d="M4 4.5C4 1.5 6.5 0.3 8.8 0.6C10.5 0.9 11 2.5 11 7" fill="none" stroke="#5066c0" stroke-width="1.4"/><circle cx="4" cy="4.2" r="1.3" fill="#3a4aa0"/><path d="M1 7.5L2.8 15.8H12.6L14.2 7.3Z" fill="#e6f0fc" stroke="#b0c4e6" stroke-width=".6"/><path d="M1.9 11.2L2.9 15.6H11.5L12.2 11.2Z" fill="#2c54c4"/><path d="M2.4 9.6H13" stroke="#c4d4f0" stroke-width=".8"/><ellipse cx="12.3" cy="13.3" rx="3.4" ry="2.7" fill="#12c62e"/></svg>
<div style="position:absolute;left:44px;top:484px;width:25px;height:15px;box-sizing:border-box;border:1.5px solid #4e4e4e;background:#fff"></div>
<svg style="position:absolute;left:114.0px;top:485px" width="11" height="11" viewBox="0 0 11 11"><rect x="0.6" y="0.6" width="10" height="10" rx="1" fill="#f4f4f4" stroke="#a6a6a6" stroke-width="1.2"/><path d="M3 5.6H8.2" stroke="#4c5270" stroke-width="1.1"/></svg>
<svg style="position:absolute;left:130.3px;top:485px" width="15" height="15" viewBox="0 0 15 15"><path d="M1 0.7H5.8L6.8 2H11.5V10H1Z" fill="#6690ee" stroke="#2450d4" stroke-width="1.4"/><path d="M3 5.8H7.8L8.8 6.8H13V13.3H3Z" fill="#90b4f6" stroke="#2450d4" stroke-width="1.4"/><path d="M4 10.3H12" stroke="#d8e6ff" stroke-width="1.1"/></svg>
<div style="position:absolute;left:146.5px;top:481px;width:196px;height:20px;background:#a8caee"></div>
<div class="t" style="left:151.5px;top:485px;font-size:14px;letter-spacing:0.85px;color:#000;font-weight:700;">Участки</div>
<svg style="position:absolute;left:8px;top:504px" width="15" height="14" viewBox="0 0 15 14"><ellipse cx="7.5" cy="6.6" rx="7.4" ry="6.2" fill="#8e5424"/><ellipse cx="7.5" cy="6.4" rx="6.4" ry="5" fill="#d0a070"/><ellipse cx="7.5" cy="6.1" rx="5.9" ry="4.1" fill="#fff"/><circle cx="7.4" cy="6.1" r="3" fill="#000"/></svg>
<svg style="position:absolute;left:25.5px;top:504px" width="16" height="16" viewBox="0 0 16 16"><path d="M4 4.5C4 1.5 6.5 0.3 8.8 0.6C10.5 0.9 11 2.5 11 7" fill="none" stroke="#5066c0" stroke-width="1.4"/><circle cx="4" cy="4.2" r="1.3" fill="#3a4aa0"/><path d="M1 7.5L2.8 15.8H12.6L14.2 7.3Z" fill="#e6f0fc" stroke="#b0c4e6" stroke-width=".6"/><path d="M1.9 11.2L2.9 15.6H11.5L12.2 11.2Z" fill="#2c54c4"/><path d="M2.4 9.6H13" stroke="#c4d4f0" stroke-width=".8"/><ellipse cx="12.3" cy="13.3" rx="3.4" ry="2.7" fill="#12c62e"/></svg>
<div style="position:absolute;left:44px;top:504px;width:25px;height:15px;box-sizing:border-box;border:1.5px solid #4e4e4e;background:#dadada"></div>
<svg style="position:absolute;left:143.0px;top:503.5px" width="15" height="15" viewBox="0 0 15 15"><path d="M0 2V0H2M13 0H15V2M0 13V15H2M15 13V15H13" fill="none" stroke="#222" stroke-width="1.6"/><ellipse cx="4.6" cy="7.5" rx="3.4" ry="4.5" fill="#1010e8"/><path d="M3.6 5.5V8" stroke="#d8d8ff" stroke-width="1"/><path d="M11.3 2.4L14 7H8.6Z" fill="#f0c020" stroke="#b08010" stroke-width=".6"/><circle cx="10.8" cy="9.7" r="2.5" fill="#f01010"/></svg>
<div class="t" style="left:165.0px;top:505px;font-size:13px;letter-spacing:0.55px;color:#bdbdbd;font-weight:400;">&lt;Группа по умолчанию&gt;</div>
<svg style="position:absolute;left:8px;top:524px" width="15" height="14" viewBox="0 0 15 14"><ellipse cx="7.5" cy="6.6" rx="7.4" ry="6.2" fill="#8e5424"/><ellipse cx="7.5" cy="6.4" rx="6.4" ry="5" fill="#d0a070"/><ellipse cx="7.5" cy="6.1" rx="5.9" ry="4.1" fill="#fff"/><circle cx="7.4" cy="6.1" r="3" fill="#000"/></svg>
<svg style="position:absolute;left:25.5px;top:524px" width="16" height="16" viewBox="0 0 16 16"><path d="M4 4.5C4 1.5 6.5 0.3 8.8 0.6C10.5 0.9 11 2.5 11 7" fill="none" stroke="#5066c0" stroke-width="1.4"/><circle cx="4" cy="4.2" r="1.3" fill="#3a4aa0"/><path d="M1 7.5L2.8 15.8H12.6L14.2 7.3Z" fill="#e6f0fc" stroke="#b0c4e6" stroke-width=".6"/><path d="M1.9 11.2L2.9 15.6H11.5L12.2 11.2Z" fill="#2c54c4"/><path d="M2.4 9.6H13" stroke="#c4d4f0" stroke-width=".8"/><ellipse cx="12.3" cy="13.3" rx="3.4" ry="2.7" fill="#12c62e"/></svg>
<div style="position:absolute;left:44px;top:524px;width:25px;height:15px;box-sizing:border-box;border:1.5px solid #b03030;background:#fff"></div>
<svg style="position:absolute;left:114.0px;top:525px" width="11" height="11" viewBox="0 0 11 11"><rect x="0.6" y="0.6" width="10" height="10" rx="1" fill="#f4f4f4" stroke="#a6a6a6" stroke-width="1.2"/><path d="M3 5.6H8.2" stroke="#4c5270" stroke-width="1.1"/></svg>
<svg style="position:absolute;left:130.3px;top:525px" width="15" height="15" viewBox="0 0 15 15"><path d="M1 0.7H5.8L6.8 2H11.5V10H1Z" fill="#6690ee" stroke="#2450d4" stroke-width="1.4"/><path d="M3 5.8H7.8L8.8 6.8H13V13.3H3Z" fill="#90b4f6" stroke="#2450d4" stroke-width="1.4"/><path d="M4 10.3H12" stroke="#d8e6ff" stroke-width="1.1"/></svg>
<div class="t" style="left:151.5px;top:525px;font-size:13px;letter-spacing:0.88px;color:#000;font-weight:400;">Кварталы</div>
<svg style="position:absolute;left:8px;top:544px" width="15" height="14" viewBox="0 0 15 14"><ellipse cx="7.5" cy="6.6" rx="7.4" ry="6.2" fill="#8e5424"/><ellipse cx="7.5" cy="6.4" rx="6.4" ry="5" fill="#d0a070"/><ellipse cx="7.5" cy="6.1" rx="5.9" ry="4.1" fill="#fff"/><circle cx="7.4" cy="6.1" r="3" fill="#000"/></svg>
<svg style="position:absolute;left:25.5px;top:544px" width="16" height="16" viewBox="0 0 16 16"><path d="M4 4.5C4 1.5 6.5 0.3 8.8 0.6C10.5 0.9 11 2.5 11 7" fill="none" stroke="#5066c0" stroke-width="1.4"/><circle cx="4" cy="4.2" r="1.3" fill="#3a4aa0"/><path d="M1 7.5L2.8 15.8H12.6L14.2 7.3Z" fill="#e6f0fc" stroke="#b0c4e6" stroke-width=".6"/><path d="M1.9 11.2L2.9 15.6H11.5L12.2 11.2Z" fill="#2c54c4"/><path d="M2.4 9.6H13" stroke="#c4d4f0" stroke-width=".8"/><ellipse cx="12.3" cy="13.3" rx="3.4" ry="2.7" fill="#12c62e"/></svg>
<div style="position:absolute;left:44px;top:544px;width:25px;height:15px;box-sizing:border-box;border:1.5px solid #4e4e4e;background:#dadada"></div>
<svg style="position:absolute;left:143.0px;top:543.5px" width="15" height="15" viewBox="0 0 15 15"><path d="M0 2V0H2M13 0H15V2M0 13V15H2M15 13V15H13" fill="none" stroke="#222" stroke-width="1.6"/><ellipse cx="4.6" cy="7.5" rx="3.4" ry="4.5" fill="#1010e8"/><path d="M3.6 5.5V8" stroke="#d8d8ff" stroke-width="1"/><path d="M11.3 2.4L14 7H8.6Z" fill="#f0c020" stroke="#b08010" stroke-width=".6"/><circle cx="10.8" cy="9.7" r="2.5" fill="#f01010"/></svg>
<div class="t" style="left:165.0px;top:545px;font-size:13px;letter-spacing:0.55px;color:#bdbdbd;font-weight:400;">&lt;Группа по умолчанию&gt;</div>
<div style="position:absolute;left:350px;top:97px;width:1132px;height:23px;box-sizing:border-box;border-top:2px solid #a9a9a9;border-bottom:1px solid #a3a3a3;border-left:2px solid #b0b0b0;border-top-left-radius:3px;background:#f0f0f0"></div>
<div class="t" style="left:355px;top:102px;font-size:13px;letter-spacing:0.48px;color:#1a1a1a;font-weight:400;">Карта (вариант расчета: СЗЗ-Эколог. Вариант расчета по умолчанию)</div>
<div style="position:absolute;left:350px;top:120px;width:1132px;height:481px;background:#fff"></div>
<svg style="position:absolute;left:0;top:0" width="1482" height="770" viewBox="0 0 1482 770"><defs><clipPath id="rc"><rect x="380" y="120" width="1102" height="481"/></clipPath></defs><g clip-path="url(#rc)"><text x="300.9" y="136" text-anchor="middle" font-family="Liberation Sans" font-size="13" letter-spacing="-0.2" fill="#1a1a1a">4600</text><text x="300.9" y="599" text-anchor="middle" font-family="Liberation Sans" font-size="13" letter-spacing="-0.2" fill="#1a1a1a">4600</text><text x="386.5" y="136" text-anchor="middle" font-family="Liberation Sans" font-size="13" letter-spacing="-0.2" fill="#1a1a1a">4700</text><text x="386.5" y="599" text-anchor="middle" font-family="Liberation Sans" font-size="13" letter-spacing="-0.2" fill="#1a1a1a">4700</text><text x="472.1" y="136" text-anchor="middle" font-family="Liberation Sans" font-size="13" letter-spacing="-0.2" fill="#1a1a1a">4800</text><text x="472.1" y="599" text-anchor="middle" font-family="Liberation Sans" font-size="13" letter-spacing="-0.2" fill="#1a1a1a">4800</text><text x="557.7" y="136" text-anchor="middle" font-family="Liberation Sans" font-size="13" letter-spacing="-0.2" fill="#1a1a1a">4900</text><text x="557.7" y="599" text-anchor="middle" font-family="Liberation Sans" font-size="13" letter-spacing="-0.2" fill="#1a1a1a">4900</text><text x="643.4" y="136" text-anchor="middle" font-family="Liberation Sans" font-size="13" letter-spacing="-0.2" fill="#1a1a1a">5000</text><text x="643.4" y="599" text-anchor="middle" font-family="Liberation Sans" font-size="13" letter-spacing="-0.2" fill="#1a1a1a">5000</text><text x="729.0" y="136" text-anchor="middle" font-family="Liberation Sans" font-size="13" letter-spacing="-0.2" fill="#1a1a1a">5100</text><text x="729.0" y="599" text-anchor="middle" font-family="Liberation Sans" font-size="13" letter-spacing="-0.2" fill="#1a1a1a">5100</text><text x="814.6" y="136" text-anchor="middle" font-family="Liberation Sans" font-size="13" letter-spacing="-0.2" fill="#1a1a1a">5200</text><text x="814.6" y="599" text-anchor="middle" font-family="Liberation Sans" font-size="13" letter-spacing="-0.2" fill="#1a1a1a">5200</text><text x="900.2" y="136" text-anchor="middle" font-family="Liberation Sans" font-size="13" letter-spacing="-0.2" fill="#1a1a1a">5300</text><text x="900.2" y="599" text-anchor="middle" font-family="Liberation Sans" font-size="13" letter-spacing="-0.2" fill="#1a1a1a">5300</text><text x="985.8" y="136" text-anchor="middle" font-family="Liberation Sans" font-size="13" letter-spacing="-0.2" fill="#1a1a1a">5400</text><text x="985.8" y="599" text-anchor="middle" font-family="Liberation Sans" font-size="13" letter-spacing="-0.2" fill="#1a1a1a">5400</text><text x="1071.5" y="136" text-anchor="middle" font-family="Liberation Sans" font-size="13" letter-spacing="-0.2" fill="#1a1a1a">5500</text><text x="1071.5" y="599" text-anchor="middle" font-family="Liberation Sans" font-size="13" letter-spacing="-0.2" fill="#1a1a1a">5500</text><text x="1157.1" y="136" text-anchor="middle" font-family="Liberation Sans" font-size="13" letter-spacing="-0.2" fill="#1a1a1a">5600</text><text x="1157.1" y="599" text-anchor="middle" font-family="Liberation Sans" font-size="13" letter-spacing="-0.2" fill="#1a1a1a">5600</text><text x="1242.7" y="136" text-anchor="middle" font-family="Liberation Sans" font-size="13" letter-spacing="-0.2" fill="#1a1a1a">5700</text><text x="1242.7" y="599" text-anchor="middle" font-family="Liberation Sans" font-size="13" letter-spacing="-0.2" fill="#1a1a1a">5700</text><text x="1328.3" y="136" text-anchor="middle" font-family="Liberation Sans" font-size="13" letter-spacing="-0.2" fill="#1a1a1a">5800</text><text x="1328.3" y="599" text-anchor="middle" font-family="Liberation Sans" font-size="13" letter-spacing="-0.2" fill="#1a1a1a">5800</text><text x="1413.9" y="136" text-anchor="middle" font-family="Liberation Sans" font-size="13" letter-spacing="-0.2" fill="#1a1a1a">5900</text><text x="1413.9" y="599" text-anchor="middle" font-family="Liberation Sans" font-size="13" letter-spacing="-0.2" fill="#1a1a1a">5900</text><text x="1499.6" y="136" text-anchor="middle" font-family="Liberation Sans" font-size="13" letter-spacing="-0.2" fill="#1a1a1a">6000</text><text x="1499.6" y="599" text-anchor="middle" font-family="Liberation Sans" font-size="13" letter-spacing="-0.2" fill="#1a1a1a">6000</text></g><path d="M381.41 145V150 M388.00 139V150 M394.59 143.5V150 M401.17 145V150 M407.76 143.5V150 M414.34 145V150 M420.93 143.5V150 M427.52 145V150 M434.10 143.5V150 M440.69 145V150 M447.28 143.5V150 M453.86 145V150 M460.45 143.5V150 M467.03 145V150 M473.62 139V150 M480.21 143.5V150 M486.79 145V150 M493.38 143.5V150 M499.96 145V150 M506.55 143.5V150 M513.14 145V150 M519.72 143.5V150 M526.31 145V150 M532.90 143.5V150 M539.48 145V150 M546.07 143.5V150 M552.65 145V150 M559.24 139V150 M565.83 143.5V150 M572.41 145V150 M579.00 143.5V150 M585.58 145V150 M592.17 143.5V150 M598.76 145V150 M605.34 143.5V150 M611.93 145V150 M618.52 143.5V150 M625.10 145V150 M631.69 143.5V150 M638.27 145V150 M644.86 139V150 M651.45 143.5V150 M658.03 145V150 M664.62 143.5V150 M671.20 145V150 M677.79 143.5V150 M684.38 145V150 M690.96 143.5V150 M697.55 145V150 M704.14 143.5V150 M710.72 145V150 M717.31 143.5V150 M723.89 145V150 M730.48 139V150 M737.07 143.5V150 M743.65 145V150 M750.24 143.5V150 M756.82 145V150 M763.41 143.5V150 M770.00 145V150 M776.58 143.5V150 M783.17 145V150 M789.76 143.5V150 M796.34 145V150 M802.93 143.5V150 M809.51 145V150 M816.10 139V150 M822.69 143.5V150 M829.27 145V150 M835.86 143.5V150 M842.44 145V150 M849.03 143.5V150 M855.62 145V150 M862.20 143.5V150 M868.79 145V150 M875.38 143.5V150 M881.96 145V150 M888.55 143.5V150 M895.13 145V150 M901.72 139V150 M908.31 143.5V150 M914.89 145V150 M921.48 143.5V150 M928.06 145V150 M934.65 143.5V150 M941.24 145V150 M947.82 143.5V150 M954.41 145V150 M961.00 143.5V150 M967.58 145V150 M974.17 143.5V150 M980.75 145V150 M987.34 139V150 M993.93 143.5V150 M1000.51 145V150 M1007.10 143.5V150 M1013.68 145V150 M1020.27 143.5V150 M1026.86 145V150 M1033.44 143.5V150 M1040.03 145V150 M1046.62 143.5V150 M1053.20 145V150 M1059.79 143.5V150 M1066.37 145V150 M1072.96 139V150 M1079.55 143.5V150 M1086.13 145V150 M1092.72 143.5V150 M1099.30 145V150 M1105.89 143.5V150 M1112.48 145V150 M1119.06 143.5V150 M1125.65 145V150 M1132.24 143.5V150 M1138.82 145V150 M1145.41 143.5V150 M1151.99 145V150 M1158.58 139V150 M1165.17 143.5V150 M1171.75 145V150 M1178.34 143.5V150 M1184.92 145V150 M1191.51 143.5V150 M1198.10 145V150 M1204.68 143.5V150 M1211.27 145V150 M1217.86 143.5V150 M1224.44 145V150 M1231.03 143.5V150 M1237.61 145V150 M1244.20 139V150 M1250.79 143.5V150 M1257.37 145V150 M1263.96 143.5V150 M1270.54 145V150 M1277.13 143.5V150 M1283.72 145V150 M1290.30 143.5V150 M1296.89 145V150 M1303.48 143.5V150 M1310.06 145V150 M1316.65 143.5V150 M1323.23 145V150 M1329.82 139V150 M1336.41 143.5V150 M1342.99 145V150 M1349.58 143.5V150 M1356.16 145V150 M1362.75 143.5V150 M1369.34 145V150 M1375.92 143.5V150 M1382.51 145V150 M1389.10 143.5V150 M1395.68 145V150 M1402.27 143.5V150 M1408.85 145V150 M1415.44 139V150 M1422.03 143.5V150 M1428.61 145V150 M1435.20 143.5V150 M1441.78 145V150 M1448.37 143.5V150 M1454.96 145V150 M1461.54 143.5V150 M1468.13 145V150 M1474.72 143.5V150 M1481.30 145V150 M381.41 572V578 M388.00 572V583 M394.59 572V579.5 M401.17 572V578 M407.76 572V579.5 M414.34 572V578 M420.93 572V579.5 M427.52 572V578 M434.10 572V579.5 M440.69 572V578 M447.28 572V579.5 M453.86 572V578 M460.45 572V579.5 M467.03 572V578 M473.62 572V583 M480.21 572V579.5 M486.79 572V578 M493.38 572V579.5 M499.96 572V578 M506.55 572V579.5 M513.14 572V578 M519.72 572V579.5 M526.31 572V578 M532.90 572V579.5 M539.48 572V578 M546.07 572V579.5 M552.65 572V578 M559.24 572V583 M565.83 572V579.5 M572.41 572V578 M579.00 572V579.5 M585.58 572V578 M592.17 572V579.5 M598.76 572V578 M605.34 572V579.5 M611.93 572V578 M618.52 572V579.5 M625.10 572V578 M631.69 572V579.5 M638.27 572V578 M644.86 572V583 M651.45 572V579.5 M658.03 572V578 M664.62 572V579.5 M671.20 572V578 M677.79 572V579.5 M684.38 572V578 M690.96 572V579.5 M697.55 572V578 M704.14 572V579.5 M710.72 572V578 M717.31 572V579.5 M723.89 572V578 M730.48 572V583 M737.07 572V579.5 M743.65 572V578 M750.24 572V579.5 M756.82 572V578 M763.41 572V579.5 M770.00 572V578 M776.58 572V579.5 M783.17 572V578 M789.76 572V579.5 M796.34 572V578 M802.93 572V579.5 M809.51 572V578 M816.10 572V583 M822.69 572V579.5 M829.27 572V578 M835.86 572V579.5 M842.44 572V578 M849.03 572V579.5 M855.62 572V578 M862.20 572V579.5 M868.79 572V578 M875.38 572V579.5 M881.96 572V578 M888.55 572V579.5 M895.13 572V578 M901.72 572V583 M908.31 572V579.5 M914.89 572V578 M921.48 572V579.5 M928.06 572V578 M934.65 572V579.5 M941.24 572V578 M947.82 572V579.5 M954.41 572V578 M961.00 572V579.5 M967.58 572V578 M974.17 572V579.5 M980.75 572V578 M987.34 572V583 M993.93 572V579.5 M1000.51 572V578 M1007.10 572V579.5 M1013.68 572V578 M1020.27 572V579.5 M1026.86 572V578 M1033.44 572V579.5 M1040.03 572V578 M1046.62 572V579.5 M1053.20 572V578 M1059.79 572V579.5 M1066.37 572V578 M1072.96 572V583 M1079.55 572V579.5 M1086.13 572V578 M1092.72 572V579.5 M1099.30 572V578 M1105.89 572V579.5 M1112.48 572V578 M1119.06 572V579.5 M1125.65 572V578 M1132.24 572V579.5 M1138.82 572V578 M1145.41 572V579.5 M1151.99 572V578 M1158.58 572V583 M1165.17 572V579.5 M1171.75 572V578 M1178.34 572V579.5 M1184.92 572V578 M1191.51 572V579.5 M1198.10 572V578 M1204.68 572V579.5 M1211.27 572V578 M1217.86 572V579.5 M1224.44 572V578 M1231.03 572V579.5 M1237.61 572V578 M1244.20 572V583 M1250.79 572V579.5 M1257.37 572V578 M1263.96 572V579.5 M1270.54 572V578 M1277.13 572V579.5 M1283.72 572V578 M1290.30 572V579.5 M1296.89 572V578 M1303.48 572V579.5 M1310.06 572V578 M1316.65 572V579.5 M1323.23 572V578 M1329.82 572V583 M1336.41 572V579.5 M1342.99 572V578 M1349.58 572V579.5 M1356.16 572V578 M1362.75 572V579.5 M1369.34 572V578 M1375.92 572V579.5 M1382.51 572V578 M1389.10 572V579.5 M1395.68 572V578 M1402.27 572V579.5 M1408.85 572V578 M1415.44 572V583 M1422.03 572V579.5 M1428.61 572V578 M1435.20 572V579.5 M1441.78 572V578 M1448.37 572V579.5 M1454.96 572V578 M1461.54 572V579.5 M1468.13 572V578 M1474.72 572V579.5 M1481.30 572V578" stroke="#1a1a1a" stroke-width="1.5" fill="none"/><text x="0" y="0" transform="translate(364.2 196.0) rotate(-90)" text-anchor="middle" font-family="Liberation Sans" font-size="13" letter-spacing="-0.2" fill="#1a1a1a">1300</text><text x="0" y="0" transform="translate(364.2 281.6) rotate(-90)" text-anchor="middle" font-family="Liberation Sans" font-size="13" letter-spacing="-0.2" fill="#1a1a1a">1200</text><text x="0" y="0" transform="translate(364.2 367.2) rotate(-90)" text-anchor="middle" font-family="Liberation Sans" font-size="13" letter-spacing="-0.2" fill="#1a1a1a">1100</text><text x="0" y="0" transform="translate(364.2 452.9) rotate(-90)" text-anchor="middle" font-family="Liberation Sans" font-size="13" letter-spacing="-0.2" fill="#1a1a1a">1000</text><text x="0" y="0" transform="translate(364.2 538.5) rotate(-90)" text-anchor="middle" font-family="Liberation Sans" font-size="13" letter-spacing="-0.2" fill="#1a1a1a">900</text><path d="M372 156.48H378 M373 163.07H378 M372 169.66H378 M373 176.24H378 M372 182.83H378 M373 189.41H378 M367 196.00H378 M372 202.59H378 M373 209.17H378 M372 215.76H378 M373 222.34H378 M372 228.93H378 M373 235.52H378 M372 242.10H378 M373 248.69H378 M372 255.28H378 M373 261.86H378 M372 268.45H378 M373 275.03H378 M367 281.62H378 M372 288.21H378 M373 294.79H378 M372 301.38H378 M373 307.96H378 M372 314.55H378 M373 321.14H378 M372 327.72H378 M373 334.31H378 M372 340.90H378 M373 347.48H378 M372 354.07H378 M373 360.65H378 M367 367.24H378 M372 373.83H378 M373 380.41H378 M372 387.00H378 M373 393.58H378 M372 400.17H378 M373 406.76H378 M372 413.34H378 M373 419.93H378 M372 426.52H378 M373 433.10H378 M372 439.69H378 M373 446.27H378 M367 452.86H378 M372 459.45H378 M373 466.03H378 M372 472.62H378 M373 479.20H378 M372 485.79H378 M373 492.38H378 M372 498.96H378 M373 505.55H378 M372 512.14H378 M373 518.72H378 M372 525.31H378 M373 531.89H378 M367 538.48H378 M372 545.07H378 M373 551.65H378 M372 558.24H378 M373 564.82H378" stroke="#1a1a1a" stroke-width="1.5" fill="none"/><path d="M378.5 123V572.5M378 150.5H1482M378 572.5H1482" stroke="#111" stroke-width="1.6" fill="none"/><rect x="351" y="123.8" width="27.5" height="26.7" fill="#fff" stroke="#111" stroke-width="1.6"/><rect x="380" y="131" width="1" height="1.6" fill="#333"/><rect x="379.5" y="594" width="1.2" height="1.6" fill="#333"/><text x="356" y="143" font-family="Liberation Sans" font-size="13" fill="#1a1a1a">км</text><path d="M843.8 487.8 L843.8 485.5 L847.9 480.2 L852.5 475.0 L853.1 472.6 L856.6 468.6 L860.1 465.6 L864.2 463.3 L868.9 459.8 L873.6 458.3 L878.2 457.8 L882.9 456.9 L887.0 451.6 L886.4 448.7 L888.7 446.9 L894.6 444.0 L900.4 439.3 L902.8 434.7 L906.3 430.0 L905.4 429.8 L909.6 425.2 L911.1 426.7 L915.8 419.4 L920.0 413.2 L923.1 403.9 L924.6 400.2 L928.3 398.7 L931.9 394.5 L934.0 395.0 L936.1 400.7 L938.1 405.4 L943.9 408.5 L946.5 407.5 L947.0 402.8 L949.1 399.2 L945.9 393.5 L947.0 390.3 L949.6 386.2 L950.6 382.0 L957.4 376.8 L963.6 370.6 L967.8 369.0 L973.5 370.6 L980.8 365.4 L986.1 360.7 L990.2 363.0 L993.7 366.0 L999.5 367.1 L1004.2 364.8 L1007.1 363.6 L1011.2 364.8 L1015.3 368.9 L1020.6 371.8 L1026.4 373.0 L1032.3 371.8 L1035.8 368.9 L1038.1 364.2 L1039.9 358.4 L1042.8 353.1 L1044.0 350.8 L1039.9 350.8 L1034.0 352.5 L1029.9 354.3 L1032.3 352.5 L1038.1 350.2 L1047.5 347.9 L1054.7 344.6 L1061.7 340.7 L1069.5 336.8 L1077.3 332.1 L1083.5 327.9 L1090.5 326.3 L1096.8 326.3 L1099.5 327.5 L1093.6 328.6 L1088.2 331.0 L1087.4 333.3 L1092.1 334.5 L1097.5 339.2 L1103.0 343.8 L1105.7 347.7 L1106.9 354.0 L1103.8 355.5 L1098.3 355.5 L1096.8 358.6 L1096.0 362.5 L1094.4 365.7 L1090.5 365.7 L1088.2 364.9 L1085.5 361.8 L1081.2 363.3 L1075.7 365.7 L1069.5 367.2 L1062.5 366.4 L1056.8 371.2 L1051.0 373.6 L1045.1 377.7 L1041.0 382.9 L1040.5 388.8 L1041.6 391.1 L1048.6 392.9 L1038.1 415.6 L1035.8 418.0 L1028.8 414.5 L1023.5 409.8 L1020.0 411.0 L1017.7 405.1 L1017.7 395.8 L1017.1 388.8 L1014.7 384.1 L1010.1 382.3 L1005.4 387.6 L998.4 390.5 L993.1 395.8 L990.8 398.7 L990.2 407.5 L990.8 415.6 L988.3 421.8 L986.2 424.3 L989.2 428.5 L992.6 430.2 L990.0 437.8 L985.8 442.9 L979.9 448.8 L974.8 454.7 L963.9 458.9 L958.8 460.6 L953.7 463.6 L951.2 466.5 L949.5 470.7 L944.8 469.9 L941.9 468.2 L938.5 467.4 L942.7 467.8 L943.2 464.8 L945.3 459.8 L947.4 455.5 L947.0 451.3 L951.2 450.5 L956.7 450.0 L958.4 447.1 L954.6 444.6 L952.0 441.2 L949.5 437.8 L945.3 438.6 L941.9 440.3 L938.5 445.4 L936.0 450.5 L936.0 455.5 L931.8 459.8 L927.5 464.8 L925.0 472.4 L925.0 473.2 L922.6 477.9 L916.8 482.6 L910.9 485.5 L901.6 493.1 L898.1 494.3 L895.7 502.4 L894.0 509.4 L887.6 513.5 L875.9 511.2 L864.2 508.9 L854.3 506.5 L853.1 504.2 L849.6 501.3 L847.9 498.9 L846.1 490.7Z" fill="none" stroke="#841818" stroke-width="1.45" stroke-linejoin="round"/><ellipse cx="1054.6" cy="347.8" rx="2" ry="2.8" fill="none" stroke="#8b1a1a" stroke-width="1.4"/></svg>
<div style="position:absolute;left:350px;top:601px;width:1132px;height:31px;background:#f0f0f0"></div>
<svg style="position:absolute;left:354px;top:605.5px" width="18" height="18" viewBox="0 0 18 18"><path d="M2.3 1L-0.5 5H5Z M18 15.5L14 12.7V18.3Z" fill="#111"/><path d="M2.3 4V15.5H15" fill="none" stroke="#111" stroke-width="1.7"/><path d="M5 6L9 10.5L15 4.5" fill="none" stroke="#902838" stroke-width="1.2"/><path d="M4 4.5H7.5L4.5 8Z M17 3V6.5L13.5 3Z" fill="#902838"/></svg>
<div style="position:absolute;left:375px;top:602px;width:239px;height:25px;box-sizing:border-box;border-top:1.5px solid #a4a4a4;border-left:1.5px solid #a4a4a4;border-right:1px solid #9a9a9a;background:#fff"></div>
<div class="t" style="left:379px;top:609px;font-size:13px;letter-spacing:0.43px;color:#111;font-weight:400;">Система координат проекта</div>
<svg style="position:absolute;left:597px;top:612px" width="12" height="8" viewBox="0 0 12 8"><path d="M1 1L6 6L11 1" fill="none" stroke="#555" stroke-width="1.3"/></svg>
<div style="position:absolute;left:619px;top:605px;width:1px;height:21px;background:#a0a0a0"></div>
<svg style="position:absolute;left:626px;top:604px" width="20" height="20" viewBox="0 0 20 20"><circle cx="12" cy="7.5" r="6.5" fill="#f4f4f4" stroke="#9c9c9c" stroke-width="1.6"/><path d="M8.5 6C9 4 11 3 13 3.5" stroke="#d0d0d0" stroke-width="1.2" fill="none"/><path d="M2 18L7.5 12" stroke="#777" stroke-width="3" stroke-linecap="round"/></svg>
<div class="t" style="left:651px;top:609px;font-size:13px;letter-spacing:0.38px;color:#111;font-weight:400;">М (1:5000000)</div>
<div style="position:absolute;left:350px;top:632px;width:1132px;height:28px;background:#fff"></div>
<div style="position:absolute;left:350px;top:632px;width:7px;height:28px;background:#f0f0f0"></div>
<div style="position:absolute;left:357px;top:634.5px;width:283px;height:26px;box-sizing:border-box;border:1px solid #111;border-bottom:none;background:#f0f0f0"></div>
<div style="position:absolute;left:350px;top:660px;width:7px;height:1px;background:#111"></div>
<div style="position:absolute;left:639px;top:660px;width:843px;height:1px;background:#111"></div>
<svg style="position:absolute;left:364.5px;top:641px" width="15" height="15" viewBox="0 0 15 15"><ellipse cx="4.6" cy="7.5" rx="3.4" ry="4.5" fill="#1010e8"/><path d="M3.6 5.5V8" stroke="#d8d8ff" stroke-width="1"/><path d="M11.3 2.4L14 7H8.6Z" fill="#f0c020" stroke="#b08010" stroke-width=".6"/><circle cx="10.8" cy="9.7" r="2.5" fill="#f01010"/></svg>
<div class="t" style="left:389px;top:644px;font-size:13px;letter-spacing:0.55px;color:#111;font-weight:400;">Атрибутивные данные текущего слоя</div>
<svg style="position:absolute;left:646.5px;top:640px" width="17" height="17" viewBox="0 0 17 17"><path d="M1 12.5Q2 4 11 1.5" fill="none" stroke="#3a5ab8" stroke-width="1.7" stroke-linecap="round"/><path d="M4 13.5Q5 7 12.5 5" fill="none" stroke="#48b048" stroke-width="1.7" stroke-linecap="round"/><path d="M7.5 14.5Q8.5 10.5 13 9" fill="none" stroke="#e03838" stroke-width="1.7" stroke-linecap="round"/></svg>
<div class="t" style="left:671px;top:644px;font-size:13px;letter-spacing:0.71px;color:#111;font-weight:400;">Результаты расчета</div>
<div style="position:absolute;left:350px;top:661px;width:1132px;height:1px;background:#f4f4f4"></div>
<div style="position:absolute;left:350px;top:662px;width:1132px;height:108px;box-sizing:border-box;border-top:2px solid #a8a8a8;border-left:1.5px solid #a8a8a8;background:#fff"></div>
<div style="position:absolute;left:365px;top:666px;width:1px;height:39px;background:#e6e6e6"></div>
<div style="position:absolute;left:390px;top:666px;width:1px;height:39px;background:#e6e6e6"></div>
<div style="position:absolute;left:466px;top:666px;width:1px;height:39px;background:#e6e6e6"></div>
<div style="position:absolute;left:590px;top:666px;width:1px;height:39px;background:#e6e6e6"></div>
<div style="position:absolute;left:840px;top:666px;width:1px;height:39px;background:#e6e6e6"></div>
<div style="position:absolute;left:966px;top:666px;width:1px;height:39px;background:#e6e6e6"></div>
<svg style="position:absolute;left:370px;top:675px" width="16" height="20" viewBox="0 0 16 20"><rect x="5.5" y="1" width="9" height="10" fill="none" stroke="#d02050" stroke-width="1.3"/><path d="M12.5 5.5L2.5 12.5L6.5 13.2L3.8 17.8L6.2 19.3L8.8 14.8L11.5 17.5Z" fill="#a8d0f0" stroke="#1a1a1a" stroke-width="1.1" stroke-linejoin="round"/></svg>
<div class="t" style="left:421px;top:679px;font-size:13px;letter-spacing:0.0px;color:#111;font-weight:400;">№</div>
<div class="t" style="left:498.5px;top:679px;font-size:13px;letter-spacing:0.31px;color:#111;font-weight:400;">Название</div>
<div class="t" style="left:670px;top:679px;font-size:13px;letter-spacing:0.32px;color:#111;font-weight:400;">Расположение</div>
<div class="t" style="left:845.5px;top:679px;font-size:13px;letter-spacing:0.56px;color:#111;font-weight:400;">Категория земель</div>
<div class="t" style="left:985px;top:671px;font-size:13px;letter-spacing:0.28px;color:#111;font-weight:400;">Разрешённое</div>
<div class="t" style="left:980px;top:688px;font-size:13px;letter-spacing:0.41px;color:#111;font-weight:400;">использование</div>
</body></html>
